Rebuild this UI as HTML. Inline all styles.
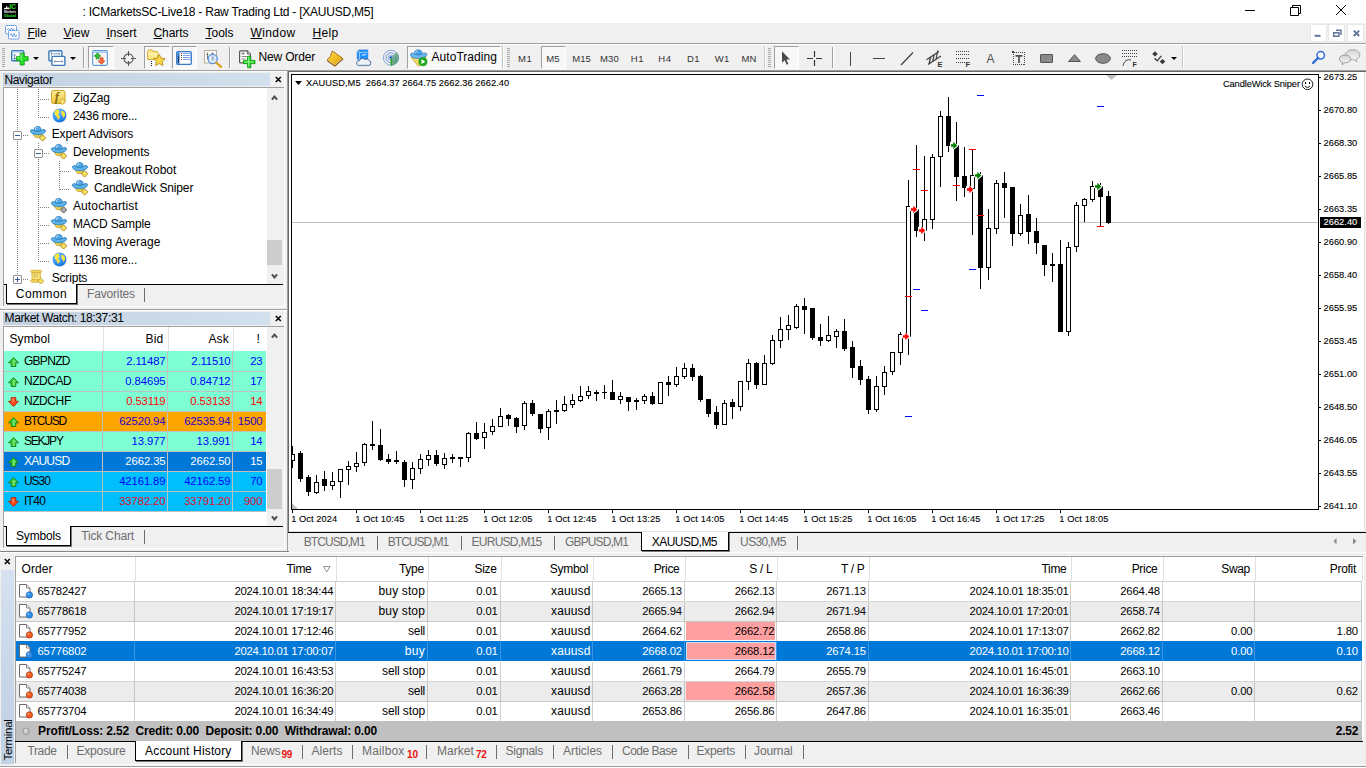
<!DOCTYPE html>
<html><head><meta charset="utf-8"><title>ICMarketsSC-Live18 - Raw Trading Ltd - [XAUUSD,M5]</title>
<style>
html,body{margin:0;padding:0;}
body{width:1366px;height:768px;overflow:hidden;background:#f0f0f0;position:relative;font-family:"Liberation Sans",sans-serif;}
div{position:absolute;box-sizing:border-box;}
svg{position:absolute;overflow:visible;}
.t{white-space:pre;}
u{text-decoration:underline;text-underline-offset:1px;}
</style></head><body>

<div style="left:0px;top:0px;width:1366px;height:23px;background:#fff;"></div>
<svg style="left:2px;top:3px" width="16" height="16" viewBox="0 0 16 16"><rect width="16" height="16" fill="#000"/>
<rect x="2" y="4.900" width="5.500" height="1.300" fill="#fff"/><rect x="4" y="3.400" width="1.300" height="2" fill="#fff"/><rect x="5.700" y="4.200" width="1" height="1" fill="#ddd"/>
<text x="7.600" y="6.200" font-size="6.800" font-weight="bold" fill="#2fe52f" font-family="Liberation Sans, sans-serif" textLength="6.400" lengthAdjust="spacingAndGlyphs">IC</text>
<text x="2" y="9.800" font-size="3.200" font-weight="bold" fill="#f4f4f4" font-family="Liberation Sans, sans-serif" textLength="12" lengthAdjust="spacingAndGlyphs">Markets</text>
<text x="2" y="13.500" font-size="3.800" font-weight="bold" fill="#2fe52f" font-family="Liberation Sans, sans-serif" textLength="12" lengthAdjust="spacingAndGlyphs">Global</text></svg>
<div class="t" style="top:3.5px;height:16px;line-height:16px;font-size:12px;color:#000;white-space:pre;letter-spacing:-0.23px;left:82.5px;">: ICMarketsSC-Live18 - Raw Trading Ltd - [XAUUSD,M5]</div>
<svg style="left:1240px;top:0" width="126" height="23" viewBox="0 0 126 23" fill="none" stroke="#000" stroke-width="1">
<path d="M5 10.5h10"/><path d="M50.5 7.5h8v8h-8z"/><path d="M52.5 7.5v-2h8v8h-2"/><path d="M96 5l10 10M106 5l-10 10"/></svg>
<div style="left:0px;top:23px;width:1366px;height:20px;background:#f0f0f0;"></div>
<svg style="left:5px;top:25px" width="15" height="15" viewBox="0 0 15 15" fill="#fff" stroke="#4a86e0" stroke-width="1">
<rect x="0.500" y="0.500" width="11" height="8.500" rx="1" stroke-dasharray="1.500 0.500"/><path d="M2 5l1.500-1.500 1.500 2 1.500-2.500 1.500 2 1.500-1" fill="none" stroke-width="0.800"/>
<rect x="3.500" y="5.500" width="10.500" height="8.500" rx="1" stroke-dasharray="1.500 0.500"/><path d="M5 10.500l1.300-2 1.400 3.500 1.400-3.500 1.400 3.500 1.300-2" fill="none" stroke-width="0.800"/></svg>
<div class="t" style="top:25.0px;height:16px;line-height:16px;font-size:12px;color:#000;white-space:pre;left:27.5px;letter-spacing:-0.08px;"><u>F</u>ile</div>
<div class="t" style="top:25.0px;height:16px;line-height:16px;font-size:12px;color:#000;white-space:pre;left:63.5px;letter-spacing:0.05px;"><u>V</u>iew</div>
<div class="t" style="top:25.0px;height:16px;line-height:16px;font-size:12px;color:#000;white-space:pre;left:106.5px;letter-spacing:-0.00px;"><u>I</u>nsert</div>
<div class="t" style="top:25.0px;height:16px;line-height:16px;font-size:12px;color:#000;white-space:pre;left:153.5px;letter-spacing:-0.06px;"><u>C</u>harts</div>
<div class="t" style="top:25.0px;height:16px;line-height:16px;font-size:12px;color:#000;white-space:pre;left:205.5px;letter-spacing:-0.00px;"><u>T</u>ools</div>
<div class="t" style="top:25.0px;height:16px;line-height:16px;font-size:12px;color:#000;white-space:pre;left:250.5px;letter-spacing:0.39px;"><u>W</u>indow</div>
<div class="t" style="top:25.0px;height:16px;line-height:16px;font-size:12px;color:#000;white-space:pre;left:312.5px;letter-spacing:0.33px;"><u>H</u>elp</div>
<div style="left:1310px;top:24px;width:17px;height:18px;background:#fff;border:1px solid #e8e8e8;"></div>
<div style="left:1328px;top:24px;width:17px;height:18px;background:#fff;border:1px solid #e8e8e8;"></div>
<div style="left:1347px;top:24px;width:17px;height:18px;background:#fff;border:1px solid #e8e8e8;"></div>
<svg style="left:1310px;top:24px" width="56" height="18" viewBox="0 0 56 18" fill="none" stroke="#63759a" stroke-width="2">
<path d="M4.500 11.800h6"/><path d="M23.700 8.700h5.200v3.600h-5.200z" stroke-width="1.400"/><path d="M26 6.200h5v3.800h-1.500" stroke-width="1.400"/><path d="M43.800 6.600l5.400 5.400M49.200 6.600l-5.400 5.400" stroke-width="1.900"/></svg>
<div style="left:0px;top:43px;width:1366px;height:1px;background:#a0a0a0;"></div>
<div style="left:0px;top:44px;width:1366px;height:1px;background:#fff;"></div>
<div style="left:0px;top:45px;width:1366px;height:25px;background:#f0f0f0;"></div>
<div style="left:2px;top:48px;width:3px;height:1px;background:#a8a8a8;"></div>
<div style="left:2px;top:50px;width:3px;height:1px;background:#a8a8a8;"></div>
<div style="left:2px;top:52px;width:3px;height:1px;background:#a8a8a8;"></div>
<div style="left:2px;top:54px;width:3px;height:1px;background:#a8a8a8;"></div>
<div style="left:2px;top:56px;width:3px;height:1px;background:#a8a8a8;"></div>
<div style="left:2px;top:58px;width:3px;height:1px;background:#a8a8a8;"></div>
<div style="left:2px;top:60px;width:3px;height:1px;background:#a8a8a8;"></div>
<div style="left:2px;top:62px;width:3px;height:1px;background:#a8a8a8;"></div>
<div style="left:2px;top:64px;width:3px;height:1px;background:#a8a8a8;"></div>
<div style="left:2px;top:66px;width:3px;height:1px;background:#a8a8a8;"></div>
<svg style="left:11px;top:49px" width="18" height="17" viewBox="0 0 18 17">
<rect x="0.700" y="1.700" width="12" height="10" rx="1" fill="#fff" stroke="#3b78b8" stroke-width="1.400"/><rect x="1.400" y="2.300" width="10.600" height="1.400" fill="#a9cbee"/>
<path d="M3.500 5v5.500M2.300 6.500L3.500 5l1.200 1.500M2.300 9l1.200 1.500L4.700 9" stroke="#6d8fb5" fill="none" stroke-width="0.900"/>
<path d="M9.200 4.200h4v3.500h3.900v4h-3.900V16h-4v-4.300H5.300v-4h3.900z" fill="#2be02b" stroke="#0e9a0e" stroke-width="0.900"/><path d="M10.200 5.200v6.500M6.300 8.700h3" stroke="#8df58d" stroke-width="0.900" fill="none"/></svg>
<svg style="left:33px;top:57px" width="6" height="3" viewBox="0 0 6 3"><path d="M0 0h6l-3 3z" fill="#000"/></svg>
<svg style="left:48px;top:49px" width="18" height="17" viewBox="0 0 18 17" fill="#fff" stroke="#3b78b8" stroke-width="1.400">
<rect x="0.900" y="1.700" width="13" height="10" rx="1"/><path d="M3.500 3.200v3.400M2.700 4.200l.8-1 .8 1M5 4.800h7M10.800 3.800l1.200 1-1.200 1" stroke="#6d8fb5" stroke-width="0.900" fill="none"/>
<rect x="3.900" y="7.400" width="13" height="9" rx="1"/><path d="M6 12.500h9M7.200 11.500L6 12.500l1.200 1M13.800 11.500l1.200 1-1.200 1" stroke="#6d8fb5" stroke-width="0.900" fill="none"/></svg>
<svg style="left:70px;top:57px" width="6" height="3" viewBox="0 0 6 3"><path d="M0 0h6l-3 3z" fill="#000"/></svg>
<div style="left:83px;top:47px;width:1px;height:21px;background:#a0a0a0;"></div>
<div style="left:84px;top:47px;width:1px;height:21px;background:#fff;"></div>
<div style="left:88px;top:46px;width:26px;height:23px;background:#f8f8f8;border:1px solid #fff;border-top-color:#a0a0a0;border-left-color:#a0a0a0;"></div>
<svg style="left:92px;top:50px" width="16" height="16" viewBox="0 0 16 16">
<rect x="0.700" y="0.700" width="14.600" height="14.600" rx="1.500" fill="#fff" stroke="#5b9bd8" stroke-width="1.200"/><rect x="1.300" y="1.300" width="13.400" height="1.600" fill="#a5cdf2"/>
<path d="M8 6h6M3 10h4M3 12.500h5M9 4h5" stroke="#e0e0e0" stroke-width="0.800"/>
<path d="M5.500 2.800l3.300 3.400H7V8.800H4V6.200H2.200z" fill="#35c435" stroke="#128512" stroke-width="0.700"/>
<path d="M9.600 14.300L6.300 10.900h1.800V7.800h3v3.100h1.800z" fill="#ff6a3c" stroke="#c23a12" stroke-width="0.700"/></svg>
<svg style="left:121px;top:51px" width="15" height="15" viewBox="0 0 15 15" fill="none" stroke="#555" stroke-width="1.100">
<circle cx="7.500" cy="7.500" r="4.600"/><path d="M7.500 0v5M7.500 10v5M0 7.500h5M10 7.500h5"/></svg>
<div style="left:144px;top:46px;width:26px;height:23px;background:#f8f8f8;border:1px solid #fff;border-top-color:#a0a0a0;border-left-color:#a0a0a0;"></div>
<svg style="left:147px;top:49px" width="20" height="18" viewBox="0 0 20 18">
<path d="M0.600 2.500c0-1 .5-1.500 1.500-1.500h2.500c1 0 1.400.5 1.600 1.500h3.300c1 0 1.500.5 1.500 1.500v6.500h-10.400z" fill="#fbe88a" stroke="#c9a227" stroke-width="0.900"/>
<path d="M1 5h9.600" stroke="#fff6c8" stroke-width="1"/>
<path d="M12.300 5.400l1.800 3.700 4 .6-2.900 2.800.7 4-3.600-1.900-3.600 1.900.7-4-2.900-2.800 4-.6z" fill="#f9d849" stroke="#b98a12" stroke-width="0.900" stroke-linejoin="round"/>
<path d="M4.500 12v5.500" stroke="#222" stroke-dasharray="1 1"/></svg>
<div style="left:172px;top:46px;width:25px;height:23px;background:#f8f8f8;border:1px solid #fff;border-top-color:#a0a0a0;border-left-color:#a0a0a0;"></div>
<svg style="left:176px;top:51px" width="16" height="14" viewBox="0 0 16 14">
<rect x="0.700" y="0.700" width="14.600" height="12.600" rx="1.200" fill="#fff" stroke="#3b78c8" stroke-width="1.300"/><rect x="1.300" y="1.300" width="2.200" height="11.400" fill="#3b78c8"/><rect x="2" y="5" width="1" height="7" fill="#16335e"/>
<path d="M6.500 2.500h8M6.500 4.500h8M6.500 6.500h8M6.500 8.500h8" stroke="#7fa6e6" stroke-width="1" shape-rendering="crispEdges"/>
<g shape-rendering="crispEdges"><rect x="5" y="2" width="1" height="1" fill="#e11"/><rect x="5" y="4" width="1" height="1" fill="#222"/><rect x="5" y="6" width="1" height="1" fill="#262"/><rect x="5" y="8" width="1" height="1" fill="#e11"/></g></svg>
<svg style="left:204px;top:50px" width="19" height="18" viewBox="0 0 19 18">
<rect x="0.500" y="0.500" width="12" height="12.500" fill="#fbfaf6" stroke="#b8ae98"/><path d="M3.500 2.500v7M8.500 2.500v7M2.500 4.500h2M7.500 3.500h2" stroke="#666" stroke-width="0.900"/>
<circle cx="8.700" cy="9" r="4.600" fill="#d6e8fb" fill-opacity="0.850" stroke="#5b94dc" stroke-width="1.300"/><rect x="7.700" y="6.500" width="2" height="4" fill="#9fb3c8"/>
<path d="M12.200 12.500l4.800 4.300" stroke="#d9a01f" stroke-width="2.300" stroke-linecap="round"/></svg>
<div style="left:229px;top:47px;width:1px;height:21px;background:#a0a0a0;"></div>
<div style="left:230px;top:47px;width:1px;height:21px;background:#fff;"></div>
<svg style="left:238px;top:50px" width="18" height="18" viewBox="0 0 18 18">
<path d="M2.600 0.900h6.700l3 3v9h-9.700c-.6 0-1-.4-1-1v-10c0-.6.400-1 1-1z" fill="#fff" stroke="#555" stroke-width="1.200"/><path d="M9.300 0.900v3h3" fill="#ddd" stroke="#555" stroke-width="0.900"/>
<path d="M3.500 3.500h3" stroke="#777" stroke-width="1.600"/><path d="M3.500 6.500h5.500M3.500 9h4" stroke="#888" stroke-width="1"/>
<path d="M9.600 6.200h3.200v4.200h4.200v3.200h-4.200v4.100h-3.200v-4.100h-4.200v-3.200h4.200z" fill="#22d822" stroke="#0e9a0e" stroke-width="0.900"/><path d="M10.700 7.200v9.500M6.400 12h9.600" stroke="#a8f8a8" stroke-width="0.900" fill="none"/></svg>
<div class="t" style="top:49.0px;height:16px;line-height:16px;font-size:12px;color:#000;white-space:pre;letter-spacing:-0.17px;left:258.5px;">New Order</div>
<svg style="left:326px;top:50px" width="18" height="17" viewBox="0 0 18 17">
<defs><linearGradient id="bk" x1="0" y1="0" x2="1" y2="1"><stop offset="0" stop-color="#fbe05a"/><stop offset="0.500" stop-color="#f2c022"/><stop offset="1" stop-color="#d89a14"/></linearGradient></defs>
<path d="M6.400 1L16.800 8.400L8.800 15.600L1 9.800C2.800 8.800 4 7 4.800 5.200C5.400 3.600 5.800 2 6.400 1Z" fill="url(#bk)" stroke="#9a6410" stroke-width="0.900" stroke-linejoin="round"/>
<path d="M1.600 10.600L8.800 15.900L16.900 8.800" fill="none" stroke="#8a5608" stroke-width="1.500"/><path d="M2.200 10.300L8.800 14.900L16 8.700" fill="none" stroke="#fdf0c0" stroke-width="0.700"/></svg>
<svg style="left:355px;top:49px" width="17" height="18" viewBox="0 0 17 18">
<path d="M2.200 2.200L4.500 0.900h8.300v9.300H2.200z" fill="#1e90ff" stroke="#1b78e0" stroke-width="0.600"/><path d="M2.200 2.200L4.600 3.300V10M4.600 3.300h8" stroke="#bfe0ff" stroke-width="0.800" fill="none"/><path d="M7 6.300l4-.8" stroke="#e8f4ff" stroke-width="1.100"/>
<path d="M3.300 16.600h10.200a2.600 2.600 0 0 0 .4-5.100 2.500 2.500 0 0 0-4-.9 3 3 0 0 0-5.300 1 2.600 2.600 0 0 0-1.300 5z" fill="#eef2f8" stroke="#4a6a9c" stroke-width="1"/>
<path d="M3.500 15.800h10" stroke="#c3cfe2" stroke-width="1"/></svg>
<svg style="left:382px;top:49px" width="18" height="18" viewBox="0 0 18 18" fill="none">
<defs><linearGradient id="sg" x1="0" y1="0" x2="1" y2="1"><stop offset="0" stop-color="#b4dcae"/><stop offset="1" stop-color="#2e8f2e"/></linearGradient></defs>
<path d="M8.900 8.700V16.700A8 8 0 0 0 16.900 8.700A8 8 0 0 0 14.500 3z" fill="url(#sg)" fill-opacity="0.950"/>
<circle cx="8.900" cy="8.700" r="7.500" stroke="#5a86dc" stroke-width="0.900" stroke-opacity="0.800"/><circle cx="8.900" cy="8.700" r="5" stroke="#4a78d8" stroke-width="0.900" stroke-opacity="0.850"/><circle cx="8.900" cy="8.700" r="2.800" stroke="#3a6fd8" stroke-width="0.800" stroke-opacity="0.700"/>
<circle cx="8.900" cy="8.500" r="1.500" fill="#2a5fd0"/><path d="M9.300 9v7.500" stroke="#2aa52a" stroke-width="1.500"/></svg>
<div style="left:407px;top:46px;width:94px;height:23px;background:#f8f8f8;border:1px solid #fff;border-top-color:#a0a0a0;border-left-color:#a0a0a0;"></div>
<svg style="left:410px;top:49px" width="18" height="19" viewBox="0 0 18 19">
<path d="M1.200 8L16.300 7.600L9.400 16.600C9 17 8.200 17 7.800 16.600Z" fill="#f7dc6a" stroke="#c49a22" stroke-width="0.800"/>
<path d="M4.300 6C4 1.600 6.200 0.800 8.200 0.800C10.300 0.800 12.400 1.600 12.100 6Z" fill="#4fa3e6" stroke="#2478bd" stroke-width="0.700"/>
<path d="M0.500 6C0.400 3.600 2.800 3.600 4.600 5C6.700 6.200 9.700 6.200 11.800 5C13.700 3.600 17 3.300 16.900 5.500C16.600 8 12.200 9.600 8.600 9.600C5 9.600 0.800 8.400 0.500 6Z" fill="#6cb8ee" stroke="#2478bd" stroke-width="0.700"/>
<path d="M5.600 4.200C5.600 2.300 6.700 1.800 7.800 1.800" fill="none" stroke="#bfe0fa" stroke-width="0.900"/>
<circle cx="12.900" cy="12.700" r="4.100" fill="#1fae1f" stroke="#0d8a0d" stroke-width="0.600"/><path d="M11.500 10.300v4.800l3.900-2.400z" fill="#fff"/></svg>
<div class="t" style="top:49.0px;height:16px;line-height:16px;font-size:12px;color:#000;white-space:pre;letter-spacing:0.05px;left:431.5px;">AutoTrading</div>
<div style="left:502px;top:46px;width:1px;height:23px;background:#c8c8c8;"></div>
<div style="left:503px;top:46px;width:1px;height:23px;background:#fff;"></div>
<div style="left:507px;top:48px;width:3px;height:1px;background:#a8a8a8;"></div>
<div style="left:507px;top:50px;width:3px;height:1px;background:#a8a8a8;"></div>
<div style="left:507px;top:52px;width:3px;height:1px;background:#a8a8a8;"></div>
<div style="left:507px;top:54px;width:3px;height:1px;background:#a8a8a8;"></div>
<div style="left:507px;top:56px;width:3px;height:1px;background:#a8a8a8;"></div>
<div style="left:507px;top:58px;width:3px;height:1px;background:#a8a8a8;"></div>
<div style="left:507px;top:60px;width:3px;height:1px;background:#a8a8a8;"></div>
<div style="left:507px;top:62px;width:3px;height:1px;background:#a8a8a8;"></div>
<div style="left:507px;top:64px;width:3px;height:1px;background:#a8a8a8;"></div>
<div style="left:507px;top:66px;width:3px;height:1px;background:#a8a8a8;"></div>
<div style="left:541px;top:46px;width:25px;height:23px;background:#f8f8f8;border:1px solid #fff;border-top-color:#a0a0a0;border-left-color:#a0a0a0;"></div>
<div class="t" style="top:51.3px;height:16px;line-height:16px;font-size:9.5px;color:#333;white-space:pre;letter-spacing:0.60px;left:517.9px;">M1</div>
<div class="t" style="top:51.3px;height:16px;line-height:16px;font-size:9.5px;color:#333;white-space:pre;letter-spacing:0.25px;left:546.2px;">M5</div>
<div class="t" style="top:51.3px;height:16px;line-height:16px;font-size:9.5px;color:#333;white-space:pre;letter-spacing:-0.03px;left:572.3px;">M15</div>
<div class="t" style="top:51.3px;height:16px;line-height:16px;font-size:9.5px;color:#333;white-space:pre;letter-spacing:0.21px;left:599.9px;">M30</div>
<div class="t" style="top:51.3px;height:16px;line-height:16px;font-size:9.5px;color:#333;white-space:pre;letter-spacing:0.58px;left:630.7px;">H1</div>
<div class="t" style="top:51.3px;height:16px;line-height:16px;font-size:9.5px;color:#333;white-space:pre;letter-spacing:0.58px;left:658.3px;">H4</div>
<div class="t" style="top:51.3px;height:16px;line-height:16px;font-size:9.5px;color:#333;white-space:pre;letter-spacing:0.28px;left:687.0px;">D1</div>
<div class="t" style="top:51.3px;height:16px;line-height:16px;font-size:9.5px;color:#333;white-space:pre;letter-spacing:0.32px;left:714.7px;">W1</div>
<div class="t" style="top:51.3px;height:16px;line-height:16px;font-size:9.5px;color:#333;white-space:pre;letter-spacing:0.26px;left:741.4px;">MN</div>
<div style="left:764px;top:46px;width:1px;height:23px;background:#c8c8c8;"></div>
<div style="left:765px;top:46px;width:1px;height:23px;background:#fff;"></div>
<div style="left:768px;top:48px;width:3px;height:1px;background:#a8a8a8;"></div>
<div style="left:768px;top:50px;width:3px;height:1px;background:#a8a8a8;"></div>
<div style="left:768px;top:52px;width:3px;height:1px;background:#a8a8a8;"></div>
<div style="left:768px;top:54px;width:3px;height:1px;background:#a8a8a8;"></div>
<div style="left:768px;top:56px;width:3px;height:1px;background:#a8a8a8;"></div>
<div style="left:768px;top:58px;width:3px;height:1px;background:#a8a8a8;"></div>
<div style="left:768px;top:60px;width:3px;height:1px;background:#a8a8a8;"></div>
<div style="left:768px;top:62px;width:3px;height:1px;background:#a8a8a8;"></div>
<div style="left:768px;top:64px;width:3px;height:1px;background:#a8a8a8;"></div>
<div style="left:768px;top:66px;width:3px;height:1px;background:#a8a8a8;"></div>
<div style="left:774px;top:46px;width:25px;height:23px;background:#f8f8f8;border:1px solid #fff;border-top-color:#a0a0a0;border-left-color:#a0a0a0;"></div>
<svg style="left:781px;top:51px" width="10" height="15" viewBox="0 0 10 15"><path d="M1 0.300v11.400l2.700-2.500 2 4.500 1.700-0.800-2-4.400h3.600z" fill="#4a4a4a"/></svg>
<svg style="left:807px;top:51px" width="15" height="15" viewBox="0 0 15 15" stroke="#333" stroke-width="1.200"><path d="M7.500 0v6M7.500 9v6M0 7.500h6M9 7.500h6"/></svg>
<div style="left:832px;top:47px;width:1px;height:21px;background:#a0a0a0;"></div>
<div style="left:833px;top:47px;width:1px;height:21px;background:#fff;"></div>
<div style="left:850px;top:52px;width:1.3px;height:14px;background:#444;"></div>
<div style="left:873px;top:58px;width:12px;height:1.3px;background:#444;"></div>
<svg style="left:900px;top:51px" width="14" height="15" viewBox="0 0 14 15"><path d="M1 14L13 1.500" stroke="#444" stroke-width="1.300"/></svg>
<svg style="left:926px;top:49px" width="18" height="19" viewBox="0 0 18 19" stroke="#3c3c3c" stroke-width="1.200" fill="none">
<path d="M0.600 10.800L12.900 2.500M2 15.500L15 7M3 15l1.800-7.500M6.500 12.800l1.800-7.500M10 10.500l1.800-9"/><text x="11.500" y="18" font-size="7.500" font-weight="bold" fill="#333" stroke="none" font-family="Liberation Sans, sans-serif">E</text></svg>
<svg style="left:955px;top:50px" width="16" height="18" viewBox="0 0 16 18" fill="none">
<g shape-rendering="crispEdges" stroke="#444" stroke-width="1"><path d="M1 1.500h13M1 4.500h13M1 8.500h13M1 12.500h9" stroke-dasharray="1 1"/></g><text x="10.500" y="17.300" font-size="7.500" font-weight="bold" fill="#333" font-family="Liberation Sans, sans-serif">F</text></svg>
<div class="t" style="top:50.7px;height:16px;line-height:16px;font-size:12px;color:#505050;white-space:pre;letter-spacing:0.70px;left:986.5px;">A</div>
<svg style="left:1012px;top:51px" width="14" height="15" viewBox="0 0 14 15" fill="none">
<g shape-rendering="crispEdges"><rect x="1.500" y="1.500" width="11" height="12" stroke="#444" stroke-dasharray="1 1"/><rect x="0" y="0" width="2" height="2" fill="#444"/></g><path d="M3.500 4.800h7M7 4.800v7.200" stroke="#505050" stroke-width="1.700"/></svg>
<div style="left:1040px;top:54px;width:13px;height:9px;background:#8a8a8a;border:1px solid #555;border-radius:1px;"></div>
<svg style="left:1068px;top:54px" width="13" height="8" viewBox="0 0 13 8"><path d="M0.500 7.500L6.500 0.700l6 6.800z" fill="#8a8a8a" stroke="#555"/></svg>
<svg style="left:1095px;top:53px" width="16" height="11" viewBox="0 0 16 11"><ellipse cx="8" cy="5.500" rx="7.400" ry="4.800" fill="#8a8a8a" stroke="#555"/></svg>
<svg style="left:1122px;top:49px" width="17" height="19" viewBox="0 0 17 19" stroke="#444" stroke-width="1" fill="none">
<path d="M0 1.500h15M0 4.500h15M0 7.500h15" stroke-dasharray="1 1"/><path d="M1 17c1-5 4-7 8-6"/><text x="10.500" y="18" font-size="7" font-weight="bold" fill="#333" stroke="none" font-family="Liberation Sans, sans-serif">F</text></svg>
<svg style="left:1151px;top:51px" width="16" height="15" viewBox="0 0 16 15" fill="#3a3a3a">
<path d="M4 0.300l2.800 2.600-2.800 2.600-2.800-2.600z"/><path d="M11.500 8l2.800 2.600-2.800 2.600-2.800-2.600z"/><path d="M3.500 7.200l2.800 2.600 4-5" stroke="#3a3a3a" stroke-width="1.300" fill="none"/></svg>
<svg style="left:1171px;top:57px" width="6" height="3" viewBox="0 0 6 3"><path d="M0 0h6l-3 3z" fill="#000"/></svg>
<div style="left:1182px;top:46px;width:1px;height:23px;background:#c8c8c8;"></div>
<div style="left:1183px;top:46px;width:1px;height:23px;background:#fff;"></div>
<svg style="left:1311px;top:50px" width="16" height="16" viewBox="0 0 16 16" fill="none">
<circle cx="9.700" cy="5.300" r="3.700" stroke="#2f6ad8" stroke-width="1.500" fill="#fff"/><path d="M7 8L2 13" stroke="#2f6ad8" stroke-width="2.300" stroke-linecap="round"/></svg>
<svg style="left:1338px;top:49px" width="24" height="18" viewBox="0 0 24 18">
<defs><linearGradient id="cb" x1="0" y1="0" x2="0" y2="1"><stop offset="0" stop-color="#d4d4d4"/><stop offset="1" stop-color="#fafafa"/></linearGradient></defs>
<path d="M14.500 0.800c4.200 0 7.300 2.200 7.300 5 0 2-1.500 3.500-3.600 4.300l.8 2.700-3.200-2.100c-4.600.3-8.300-1.900-8.300-4.900 0-2.800 3.100-5 7-5z" fill="url(#cb)" stroke="#9c9c9c" stroke-width="0.900"/>
<path d="M7 6c3.200 0 5.700 1.800 5.700 4 0 2.300-2.800 4-6 3.800l-2.700 2 .6-2.600C2.600 12.500 1.300 11.300 1.300 10c0-2.200 2.500-4 5.700-4z" fill="url(#cb)" stroke="#949494" stroke-width="0.900"/></svg>
<div style="left:0px;top:70px;width:1366px;height:1px;background:#a0a0a0;"></div>
<div style="left:3px;top:73px;width:267px;height:13px;background:linear-gradient(90deg,#c3d1e1 0%,#cad8e7 50%,#d3e0ee 100%);"></div>
<div class="t" style="top:71.5px;height:16px;line-height:16px;font-size:12px;color:#000;white-space:pre;letter-spacing:-0.37px;left:4.5px;">Navigator</div>
<svg style="left:275px;top:76px" width="7" height="7" viewBox="0 0 7 7"><path d="M0.800 1l5 5M5.800 1l-5 5" stroke="#000" stroke-width="1.500"/></svg>
<div style="left:3px;top:87px;width:281px;height:197px;background:#fff;border-left:1px solid #a0a0a0;border-top:1px solid #a0a0a0;"></div>
<div style="left:267px;top:88px;width:17px;height:196px;background:#f0f0f0;"></div>
<div style="left:267px;top:240px;width:15px;height:25px;background:#cdcdcd;"></div>
<svg style="left:271px;top:95px" width="7" height="6" viewBox="0 0 7 6"><path d="M0.900 4.700L3.500 1.500L6.100 4.700" fill="none" stroke="#505050" stroke-width="2"/></svg>
<svg style="left:271px;top:273px" width="7" height="6" viewBox="0 0 7 6"><path d="M0.900 1.300L3.500 4.500L6.100 1.300" fill="none" stroke="#505050" stroke-width="2"/></svg>
<div style="left:17px;top:89px;width:1px;height:42px;background:repeating-linear-gradient(180deg,#808080 0 1px,transparent 1px 2px);"></div>
<div style="left:17px;top:141px;width:1px;height:134px;background:repeating-linear-gradient(180deg,#808080 0 1px,transparent 1px 2px);"></div>
<div style="left:38px;top:89px;width:1px;height:29px;background:repeating-linear-gradient(180deg,#808080 0 1px,transparent 1px 2px);"></div>
<div style="left:40px;top:99px;width:9px;height:1px;background:repeating-linear-gradient(90deg,#808080 0 1px,transparent 1px 2px);"></div>
<div style="left:40px;top:117px;width:9px;height:1px;background:repeating-linear-gradient(90deg,#808080 0 1px,transparent 1px 2px);"></div>
<div style="left:23px;top:135px;width:5px;height:1px;background:repeating-linear-gradient(90deg,#808080 0 1px,transparent 1px 2px);"></div>
<div style="left:38px;top:143px;width:1px;height:6px;background:repeating-linear-gradient(180deg,#808080 0 1px,transparent 1px 2px);"></div>
<div style="left:38px;top:159px;width:1px;height:103px;background:repeating-linear-gradient(180deg,#808080 0 1px,transparent 1px 2px);"></div>
<div style="left:44px;top:153px;width:5px;height:1px;background:repeating-linear-gradient(90deg,#808080 0 1px,transparent 1px 2px);"></div>
<div style="left:40px;top:207px;width:9px;height:1px;background:repeating-linear-gradient(90deg,#808080 0 1px,transparent 1px 2px);"></div>
<div style="left:40px;top:225px;width:9px;height:1px;background:repeating-linear-gradient(90deg,#808080 0 1px,transparent 1px 2px);"></div>
<div style="left:40px;top:243px;width:9px;height:1px;background:repeating-linear-gradient(90deg,#808080 0 1px,transparent 1px 2px);"></div>
<div style="left:40px;top:261px;width:9px;height:1px;background:repeating-linear-gradient(90deg,#808080 0 1px,transparent 1px 2px);"></div>
<div style="left:59px;top:161px;width:1px;height:29px;background:repeating-linear-gradient(180deg,#808080 0 1px,transparent 1px 2px);"></div>
<div style="left:60px;top:171px;width:10px;height:1px;background:repeating-linear-gradient(90deg,#808080 0 1px,transparent 1px 2px);"></div>
<div style="left:60px;top:189px;width:10px;height:1px;background:repeating-linear-gradient(90deg,#808080 0 1px,transparent 1px 2px);"></div>
<div style="left:23px;top:279px;width:5px;height:1px;background:repeating-linear-gradient(90deg,#808080 0 1px,transparent 1px 2px);"></div>
<div style="left:13px;top:131px;width:9px;height:9px;background:#fff;border:1px solid #919191;border-radius:1px;"></div>
<div style="left:15px;top:135px;width:5px;height:1px;background:#3a5ba0;"></div>
<div style="left:34px;top:149px;width:9px;height:9px;background:#fff;border:1px solid #919191;border-radius:1px;"></div>
<div style="left:36px;top:153px;width:5px;height:1px;background:#3a5ba0;"></div>
<div style="left:13px;top:275px;width:9px;height:9px;background:#fff;border:1px solid #919191;border-radius:1px;"></div>
<div style="left:15px;top:279px;width:5px;height:1px;background:#3a5ba0;"></div>
<div style="left:17px;top:277px;width:1px;height:5px;background:#3a5ba0;"></div>
<svg style="left:51px;top:90px" width="16" height="16" viewBox="0 0 16 16">
<defs><linearGradient id="fg" x1="0" y1="0" x2="0" y2="1"><stop offset="0" stop-color="#fbec9a"/><stop offset="1" stop-color="#f1c93a"/></linearGradient></defs>
<rect x="0.500" y="0.500" width="13.500" height="13" rx="2" fill="url(#fg)" stroke="#c9a227"/>
<text x="3.800" y="10.800" font-size="13" font-style="italic" font-weight="bold" fill="#8a6a10" font-family="Liberation Serif, serif">f</text>
<path d="M11.500 8.300l3.200 3.200-3.200 3.200-3.200-3.200z" fill="#f9e27a" stroke="#c49a22" stroke-width="0.800"/></svg>
<div class="t" style="top:90.0px;height:16px;line-height:16px;font-size:12px;color:#000;white-space:pre;letter-spacing:-0.06px;left:72.9px;">ZigZag</div>
<svg style="left:51.5px;top:107.8px" width="15" height="15" viewBox="0 0 15 15">
<defs><radialGradient id="gg1" cx="0.350" cy="0.300" r="0.800"><stop offset="0" stop-color="#7cc4ff"/><stop offset="0.600" stop-color="#2f8ff0"/><stop offset="1" stop-color="#1667d6"/></radialGradient></defs>
<circle cx="7.500" cy="7.500" r="6.900" fill="url(#gg1)"/>
<path d="M2.600 3.600C3.600 2 5.600 1.300 6.800 1.600C7.600 2.400 6.600 3.200 7.200 4C7.800 5 6.200 5.400 6.400 6.600C6.600 7.800 8 8 7.600 9.400C7.300 10.600 6.800 11.600 5.600 11.400C5 10 5.300 9 4.300 8.200C3.200 7.200 2 5.600 2.600 3.600Z" fill="#ffe53a"/>
<path d="M9.800 2.600C11.600 3 13 4.800 13.200 6.600C13 8.200 12.400 9.400 11.600 10C11 9 11.200 8 10.300 7.400C9.400 6.600 9.600 5.400 9.300 4.400C9.100 3.600 9.300 3 9.800 2.600Z" fill="#ffe53a"/></svg>
<div class="t" style="top:108.0px;height:16px;line-height:16px;font-size:12px;color:#000;white-space:pre;letter-spacing:-0.26px;left:72.9px;">2436 more...</div>
<svg style="left:30px;top:126px" width="17" height="16" viewBox="0 0 17 16"><path d="M3.600 7.400C3.600 13 11.400 13 11.400 7.400Z" fill="#f6d64e" stroke="#b8901a" stroke-width="0.800"/>
<path d="M4 5.300C3.800 1.300 5.800 0.500 7.600 0.500C9.600 0.500 11.400 1.300 11.200 5.300Z" fill="#56a9e6" stroke="#1d79b8" stroke-width="0.800"/>
<path d="M0.500 5.200C0.400 3.200 2.600 3.300 4.300 4.600C6.300 5.700 9.100 5.700 11.100 4.600C12.900 3.300 15.600 3 15.500 5C15.200 7.400 11.300 8.800 8 8.800C4.700 8.800 0.800 7.600 0.500 5.200Z" fill="#5fb2e8" stroke="#1d79b8" stroke-width="0.800"/>
<path d="M5.300 3.800C5.300 2 6.300 1.500 7.300 1.500" fill="none" stroke="#cfe8fb" stroke-width="1"/>
<path d="M12.600 8.700l3.200 3.200-3.200 3.200-3.200-3.200z" fill="#f8de62" stroke="#a88414" stroke-width="0.900"/></svg>
<div class="t" style="top:126.0px;height:16px;line-height:16px;font-size:12px;color:#000;white-space:pre;letter-spacing:-0.12px;left:51.7px;">Expert Advisors</div>
<svg style="left:51px;top:144px" width="17" height="16" viewBox="0 0 17 16"><path d="M3.600 7.400C3.600 13 11.400 13 11.400 7.400Z" fill="#f6d64e" stroke="#b8901a" stroke-width="0.800"/>
<path d="M4 5.300C3.800 1.300 5.800 0.500 7.600 0.500C9.600 0.500 11.400 1.300 11.200 5.300Z" fill="#56a9e6" stroke="#1d79b8" stroke-width="0.800"/>
<path d="M0.500 5.200C0.400 3.200 2.600 3.300 4.300 4.600C6.300 5.700 9.100 5.700 11.100 4.600C12.900 3.300 15.600 3 15.500 5C15.200 7.400 11.300 8.800 8 8.800C4.700 8.800 0.800 7.600 0.500 5.200Z" fill="#5fb2e8" stroke="#1d79b8" stroke-width="0.800"/>
<path d="M5.300 3.800C5.300 2 6.300 1.500 7.300 1.500" fill="none" stroke="#cfe8fb" stroke-width="1"/>
<path d="M12.600 8.700l3.200 3.200-3.200 3.200-3.200-3.200z" fill="#f8de62" stroke="#a88414" stroke-width="0.900"/></svg>
<div class="t" style="top:144.0px;height:16px;line-height:16px;font-size:12px;color:#000;white-space:pre;left:72.9px;">Developments</div>
<svg style="left:72px;top:162px" width="17" height="16" viewBox="0 0 17 16"><path d="M3.600 7.400C3.600 13 11.400 13 11.400 7.400Z" fill="#f6d64e" stroke="#b8901a" stroke-width="0.800"/>
<path d="M4 5.300C3.800 1.300 5.800 0.500 7.600 0.500C9.600 0.500 11.400 1.300 11.200 5.300Z" fill="#56a9e6" stroke="#1d79b8" stroke-width="0.800"/>
<path d="M0.500 5.200C0.400 3.200 2.600 3.300 4.300 4.600C6.300 5.700 9.100 5.700 11.100 4.600C12.900 3.300 15.600 3 15.500 5C15.200 7.400 11.300 8.800 8 8.800C4.700 8.800 0.800 7.600 0.500 5.200Z" fill="#5fb2e8" stroke="#1d79b8" stroke-width="0.800"/>
<path d="M5.300 3.800C5.300 2 6.300 1.500 7.300 1.500" fill="none" stroke="#cfe8fb" stroke-width="1"/>
<path d="M12.600 8.700l3.200 3.200-3.200 3.200-3.200-3.200z" fill="#f8de62" stroke="#a88414" stroke-width="0.900"/></svg>
<div class="t" style="top:162.0px;height:16px;line-height:16px;font-size:12px;color:#000;white-space:pre;letter-spacing:-0.08px;left:93.9px;">Breakout Robot</div>
<svg style="left:72px;top:180px" width="17" height="16" viewBox="0 0 17 16"><path d="M3.600 7.400C3.600 13 11.400 13 11.400 7.400Z" fill="#f6d64e" stroke="#b8901a" stroke-width="0.800"/>
<path d="M4 5.300C3.800 1.300 5.800 0.500 7.600 0.500C9.600 0.500 11.400 1.300 11.200 5.300Z" fill="#56a9e6" stroke="#1d79b8" stroke-width="0.800"/>
<path d="M0.500 5.200C0.400 3.200 2.600 3.300 4.300 4.600C6.300 5.700 9.100 5.700 11.100 4.600C12.900 3.300 15.600 3 15.500 5C15.200 7.400 11.300 8.800 8 8.800C4.700 8.800 0.800 7.600 0.500 5.200Z" fill="#5fb2e8" stroke="#1d79b8" stroke-width="0.800"/>
<path d="M5.300 3.800C5.300 2 6.300 1.500 7.300 1.500" fill="none" stroke="#cfe8fb" stroke-width="1"/>
<path d="M12.600 8.700l3.200 3.200-3.200 3.200-3.200-3.200z" fill="#f8de62" stroke="#a88414" stroke-width="0.900"/></svg>
<div class="t" style="top:180.0px;height:16px;line-height:16px;font-size:12px;color:#000;white-space:pre;letter-spacing:-0.16px;left:93.9px;">CandleWick Sniper</div>
<svg style="left:51px;top:198px" width="17" height="16" viewBox="0 0 17 16"><path d="M3.600 7.400C3.600 13 11.400 13 11.400 7.400Z" fill="#f6d64e" stroke="#b8901a" stroke-width="0.800"/>
<path d="M4 5.300C3.800 1.300 5.800 0.500 7.600 0.500C9.600 0.500 11.400 1.300 11.200 5.300Z" fill="#56a9e6" stroke="#1d79b8" stroke-width="0.800"/>
<path d="M0.500 5.200C0.400 3.200 2.600 3.300 4.300 4.600C6.300 5.700 9.100 5.700 11.100 4.600C12.900 3.300 15.600 3 15.500 5C15.200 7.400 11.300 8.800 8 8.800C4.700 8.800 0.800 7.600 0.500 5.200Z" fill="#5fb2e8" stroke="#1d79b8" stroke-width="0.800"/>
<path d="M5.300 3.800C5.300 2 6.300 1.500 7.300 1.500" fill="none" stroke="#cfe8fb" stroke-width="1"/>
<path d="M12.600 8.700l3.200 3.200-3.200 3.200-3.200-3.200z" fill="#a9a9a9" stroke="#5e5e5e" stroke-width="0.900"/></svg>
<div class="t" style="top:198.0px;height:16px;line-height:16px;font-size:12px;color:#000;white-space:pre;letter-spacing:0.14px;left:72.9px;">Autochartist</div>
<svg style="left:51px;top:216px" width="17" height="16" viewBox="0 0 17 16"><path d="M3.600 7.400C3.600 13 11.400 13 11.400 7.400Z" fill="#f6d64e" stroke="#b8901a" stroke-width="0.800"/>
<path d="M4 5.300C3.800 1.300 5.800 0.500 7.600 0.500C9.600 0.500 11.400 1.300 11.200 5.300Z" fill="#56a9e6" stroke="#1d79b8" stroke-width="0.800"/>
<path d="M0.500 5.200C0.400 3.200 2.600 3.300 4.300 4.600C6.300 5.700 9.100 5.700 11.100 4.600C12.900 3.300 15.600 3 15.500 5C15.200 7.400 11.300 8.800 8 8.800C4.700 8.800 0.800 7.600 0.500 5.200Z" fill="#5fb2e8" stroke="#1d79b8" stroke-width="0.800"/>
<path d="M5.300 3.800C5.300 2 6.300 1.500 7.300 1.500" fill="none" stroke="#cfe8fb" stroke-width="1"/>
<path d="M12.600 8.700l3.200 3.200-3.200 3.200-3.200-3.200z" fill="#f8de62" stroke="#a88414" stroke-width="0.900"/></svg>
<div class="t" style="top:216.0px;height:16px;line-height:16px;font-size:12px;color:#000;white-space:pre;letter-spacing:-0.16px;left:72.9px;">MACD Sample</div>
<svg style="left:51px;top:234px" width="17" height="16" viewBox="0 0 17 16"><path d="M3.600 7.400C3.600 13 11.400 13 11.400 7.400Z" fill="#f6d64e" stroke="#b8901a" stroke-width="0.800"/>
<path d="M4 5.300C3.800 1.300 5.800 0.500 7.600 0.500C9.600 0.500 11.400 1.300 11.200 5.300Z" fill="#56a9e6" stroke="#1d79b8" stroke-width="0.800"/>
<path d="M0.500 5.200C0.400 3.200 2.600 3.300 4.300 4.600C6.300 5.700 9.100 5.700 11.100 4.600C12.900 3.300 15.600 3 15.500 5C15.200 7.400 11.300 8.800 8 8.800C4.700 8.800 0.800 7.600 0.500 5.200Z" fill="#5fb2e8" stroke="#1d79b8" stroke-width="0.800"/>
<path d="M5.300 3.800C5.300 2 6.300 1.500 7.300 1.500" fill="none" stroke="#cfe8fb" stroke-width="1"/>
<path d="M12.600 8.700l3.200 3.200-3.200 3.200-3.200-3.200z" fill="#f8de62" stroke="#a88414" stroke-width="0.900"/></svg>
<div class="t" style="top:234.0px;height:16px;line-height:16px;font-size:12px;color:#000;white-space:pre;letter-spacing:0.13px;left:72.9px;">Moving Average</div>
<svg style="left:51.5px;top:251.8px" width="15" height="15" viewBox="0 0 15 15">
<defs><radialGradient id="gg2" cx="0.350" cy="0.300" r="0.800"><stop offset="0" stop-color="#7cc4ff"/><stop offset="0.600" stop-color="#2f8ff0"/><stop offset="1" stop-color="#1667d6"/></radialGradient></defs>
<circle cx="7.500" cy="7.500" r="6.900" fill="url(#gg2)"/>
<path d="M2.600 3.600C3.600 2 5.600 1.300 6.800 1.600C7.600 2.400 6.600 3.200 7.200 4C7.800 5 6.200 5.400 6.400 6.600C6.600 7.800 8 8 7.600 9.400C7.300 10.600 6.800 11.600 5.600 11.400C5 10 5.300 9 4.300 8.200C3.200 7.200 2 5.600 2.600 3.600Z" fill="#ffe53a"/>
<path d="M9.800 2.600C11.600 3 13 4.800 13.200 6.600C13 8.200 12.400 9.400 11.600 10C11 9 11.200 8 10.300 7.400C9.400 6.600 9.600 5.400 9.300 4.400C9.100 3.600 9.300 3 9.800 2.600Z" fill="#ffe53a"/></svg>
<div class="t" style="top:252.0px;height:16px;line-height:16px;font-size:12px;color:#000;white-space:pre;letter-spacing:-0.19px;left:72.9px;">1136 more...</div>
<svg style="left:30px;top:270px" width="17" height="16" viewBox="0 0 17 16">
<rect x="2" y="2" width="8.300" height="8.500" fill="#f9e27a" stroke="#c9a227" stroke-width="0.700"/>
<path d="M0.400 1.400L1.600 0.300H10.800L12 1.400L10.800 2.700H1.600Z" fill="#f6d75e" stroke="#c9a227" stroke-width="0.700"/>
<path d="M0.400 10.900L1.600 9.700H8.500L9.600 10.900L8.500 12.200H1.600Z" fill="#f6d75e" stroke="#c9a227" stroke-width="0.700"/>
<path d="M4 4.800h1.500M6.800 4.800h1M4 6.800h1M6.300 6.800h1" stroke="#a08a40" stroke-width="0.900"/>
<path d="M10.700 8.100l3 3-3 3-3-3z" fill="#f8de62" stroke="#b8901a" stroke-width="0.800"/></svg>
<div class="t" style="top:270.0px;height:16px;line-height:16px;font-size:12px;color:#000;white-space:pre;letter-spacing:-0.18px;left:51.7px;">Scripts</div>
<div style="left:3px;top:284px;width:282px;height:24px;background:#f0f0f0;"></div>
<div style="left:4px;top:284px;width:279px;height:1px;background:#000;"></div>
<div style="left:6px;top:284px;width:71px;height:20px;background:#fff;border:1px solid #000;border-top:none;box-shadow:1px 1px 0 #777;"></div>
<div style="left:7px;top:284px;width:68px;height:1px;background:#fff;"></div>
<div class="t" style="top:285.8px;height:16px;line-height:16px;font-size:12px;color:#000;white-space:pre;letter-spacing:0.44px;left:15.8px;">Common</div>
<div class="t" style="top:285.8px;height:16px;line-height:16px;font-size:12px;color:#6d6d6d;white-space:pre;letter-spacing:-0.16px;left:87.0px;">Favorites</div>
<div style="left:144px;top:288px;width:1px;height:14px;background:#6d6d6d;"></div>
<div style="left:3px;top:312px;width:267px;height:13px;background:linear-gradient(90deg,#c3d1e1 0%,#cad8e7 50%,#d3e0ee 100%);"></div>
<div class="t" style="top:310.0px;height:16px;line-height:16px;font-size:12px;color:#000;white-space:pre;letter-spacing:-0.36px;left:4.5px;">Market Watch: 18:37:31</div>
<svg style="left:275px;top:315px" width="7" height="7" viewBox="0 0 7 7"><path d="M0.800 1l5 5M5.800 1l-5 5" stroke="#000" stroke-width="1.500"/></svg>
<div style="left:3px;top:326px;width:281px;height:200px;background:#fff;border-left:1px solid #a0a0a0;border-top:1px solid #a0a0a0;"></div>
<div style="left:267px;top:327px;width:17px;height:199px;background:#f0f0f0;"></div>
<div style="left:267px;top:469px;width:15px;height:40px;background:#cdcdcd;"></div>
<svg style="left:271px;top:333px" width="7" height="6" viewBox="0 0 7 6"><path d="M0.900 4.700L3.500 1.500L6.100 4.700" fill="none" stroke="#505050" stroke-width="2"/></svg>
<svg style="left:271px;top:515px" width="7" height="6" viewBox="0 0 7 6"><path d="M0.900 1.300L3.500 4.500L6.100 1.300" fill="none" stroke="#505050" stroke-width="2"/></svg>
<div style="left:103px;top:327px;width:1px;height:24px;background:#e0e0e0;"></div>
<div style="left:168px;top:327px;width:1px;height:24px;background:#e0e0e0;"></div>
<div style="left:233px;top:327px;width:1px;height:24px;background:#e0e0e0;"></div>
<div class="t" style="top:330.5px;height:16px;line-height:16px;font-size:12px;color:#000;white-space:pre;letter-spacing:0.08px;left:9.5px;">Symbol</div>
<div class="t" style="top:330.5px;height:16px;line-height:16px;font-size:12px;color:#000;white-space:pre;letter-spacing:0.15px;left:145.5px;">Bid</div>
<div class="t" style="top:330.5px;height:16px;line-height:16px;font-size:12px;color:#000;white-space:pre;letter-spacing:0.10px;left:208.5px;">Ask</div>
<div class="t" style="top:330.5px;height:16px;line-height:16px;font-size:12px;color:#000;white-space:pre;right:1106.2px;">!</div>
<div style="left:4px;top:351px;width:262px;height:20px;background:#7fffd4;"></div>
<svg style="left:7.8px;top:357.09999999999997px" width="11" height="10" viewBox="0 0 11 10"><path d="M5.500 0.600L10.500 5.800H7.800V9.500H3.200V5.800H0.500z" fill="#3ccf3c" stroke="#1a7a1a" stroke-width="0.900" stroke-linejoin="round"/><path d="M5.500 2.300L8.200 5H6.800V8.500H5V4.500z" fill="#8df08d" fill-opacity="0.700"/></svg>
<div class="t" style="top:352.7px;height:16px;line-height:16px;font-size:12px;color:#000;white-space:pre;letter-spacing:-0.68px;left:23.9px;">GBPNZD</div>
<div class="t" style="top:352.7px;height:16px;line-height:16px;font-size:11.3px;color:#0000ff;white-space:pre;right:1200.5px;letter-spacing:-0.100px;">2.11487</div>
<div class="t" style="top:352.7px;height:16px;line-height:16px;font-size:11.3px;color:#0000ff;white-space:pre;right:1135.5px;letter-spacing:-0.100px;">2.11510</div>
<div class="t" style="top:352.7px;height:16px;line-height:16px;font-size:11.3px;color:#0000ff;white-space:pre;right:1103.5px;letter-spacing:-0.100px;">23</div>
<div style="left:4px;top:371px;width:262px;height:20px;background:#7fffd4;"></div>
<svg style="left:7.8px;top:377.09999999999997px" width="11" height="10" viewBox="0 0 11 10"><path d="M5.500 0.600L10.500 5.800H7.800V9.500H3.200V5.800H0.500z" fill="#3ccf3c" stroke="#1a7a1a" stroke-width="0.900" stroke-linejoin="round"/><path d="M5.500 2.300L8.200 5H6.800V8.500H5V4.500z" fill="#8df08d" fill-opacity="0.700"/></svg>
<div class="t" style="top:372.7px;height:16px;line-height:16px;font-size:12px;color:#000;white-space:pre;letter-spacing:-0.42px;left:23.9px;">NZDCAD</div>
<div class="t" style="top:372.7px;height:16px;line-height:16px;font-size:11.3px;color:#0000ff;white-space:pre;right:1200.5px;letter-spacing:-0.100px;">0.84695</div>
<div class="t" style="top:372.7px;height:16px;line-height:16px;font-size:11.3px;color:#0000ff;white-space:pre;right:1135.5px;letter-spacing:-0.100px;">0.84712</div>
<div class="t" style="top:372.7px;height:16px;line-height:16px;font-size:11.3px;color:#0000ff;white-space:pre;right:1103.5px;letter-spacing:-0.100px;">17</div>
<div style="left:4px;top:391px;width:262px;height:20px;background:#7fffd4;"></div>
<svg style="left:7.8px;top:397.09999999999997px" width="11" height="10" viewBox="0 0 11 10"><path d="M5.500 9.500L10.500 4.300H7.800V0.600H3.200V4.300H0.500z" fill="#ff4a1a" stroke="#a82a08" stroke-width="0.900" stroke-linejoin="round"/><path d="M4.200 1.400H6V5.200H4.200z" fill="#ff9a7a" fill-opacity="0.700"/></svg>
<div class="t" style="top:392.7px;height:16px;line-height:16px;font-size:12px;color:#000;white-space:pre;letter-spacing:-0.40px;left:23.9px;">NZDCHF</div>
<div class="t" style="top:392.7px;height:16px;line-height:16px;font-size:11.3px;color:#ff0000;white-space:pre;right:1200.5px;letter-spacing:-0.100px;">0.53119</div>
<div class="t" style="top:392.7px;height:16px;line-height:16px;font-size:11.3px;color:#ff0000;white-space:pre;right:1135.5px;letter-spacing:-0.100px;">0.53133</div>
<div class="t" style="top:392.7px;height:16px;line-height:16px;font-size:11.3px;color:#ff0000;white-space:pre;right:1103.5px;letter-spacing:-0.100px;">14</div>
<div style="left:4px;top:411px;width:262px;height:20px;background:#ffa500;"></div>
<svg style="left:7.8px;top:417.09999999999997px" width="11" height="10" viewBox="0 0 11 10"><path d="M5.500 0.600L10.500 5.800H7.800V9.500H3.200V5.800H0.500z" fill="#3ccf3c" stroke="#1a7a1a" stroke-width="0.900" stroke-linejoin="round"/><path d="M5.500 2.300L8.200 5H6.800V8.500H5V4.500z" fill="#8df08d" fill-opacity="0.700"/></svg>
<div class="t" style="top:412.7px;height:16px;line-height:16px;font-size:12px;color:#000;white-space:pre;letter-spacing:-1.20px;left:23.9px;">BTCUSD</div>
<div class="t" style="top:412.7px;height:16px;line-height:16px;font-size:11.3px;color:#2a00c8;white-space:pre;right:1200.5px;letter-spacing:-0.100px;">62520.94</div>
<div class="t" style="top:412.7px;height:16px;line-height:16px;font-size:11.3px;color:#2a00c8;white-space:pre;right:1135.5px;letter-spacing:-0.100px;">62535.94</div>
<div class="t" style="top:412.7px;height:16px;line-height:16px;font-size:11.3px;color:#2a00c8;white-space:pre;right:1103.5px;letter-spacing:-0.100px;">1500</div>
<div style="left:4px;top:431px;width:262px;height:20px;background:#7fffd4;"></div>
<svg style="left:7.8px;top:437.09999999999997px" width="11" height="10" viewBox="0 0 11 10"><path d="M5.500 0.600L10.500 5.800H7.800V9.500H3.200V5.800H0.500z" fill="#3ccf3c" stroke="#1a7a1a" stroke-width="0.900" stroke-linejoin="round"/><path d="M5.500 2.300L8.200 5H6.800V8.500H5V4.500z" fill="#8df08d" fill-opacity="0.700"/></svg>
<div class="t" style="top:432.7px;height:16px;line-height:16px;font-size:12px;color:#000;white-space:pre;letter-spacing:-1.20px;left:23.9px;">SEKJPY</div>
<div class="t" style="top:432.7px;height:16px;line-height:16px;font-size:11.3px;color:#0000ff;white-space:pre;right:1200.5px;letter-spacing:-0.100px;">13.977</div>
<div class="t" style="top:432.7px;height:16px;line-height:16px;font-size:11.3px;color:#0000ff;white-space:pre;right:1135.5px;letter-spacing:-0.100px;">13.991</div>
<div class="t" style="top:432.7px;height:16px;line-height:16px;font-size:11.3px;color:#0000ff;white-space:pre;right:1103.5px;letter-spacing:-0.100px;">14</div>
<div style="left:4px;top:451px;width:262px;height:20px;background:#0078d7;"></div>
<svg style="left:7.8px;top:457.09999999999997px" width="11" height="10" viewBox="0 0 11 10"><path d="M5.500 0.600L10.500 5.800H7.800V9.500H3.200V5.800H0.500z" fill="#3ccf3c" stroke="#1a7a1a" stroke-width="0.900" stroke-linejoin="round"/><path d="M5.500 2.300L8.200 5H6.800V8.500H5V4.500z" fill="#8df08d" fill-opacity="0.700"/></svg>
<div class="t" style="top:452.7px;height:16px;line-height:16px;font-size:12px;color:#fff;white-space:pre;letter-spacing:-0.74px;left:23.9px;">XAUUSD</div>
<div class="t" style="top:452.7px;height:16px;line-height:16px;font-size:11.3px;color:#fff;white-space:pre;right:1200.5px;letter-spacing:-0.100px;">2662.35</div>
<div class="t" style="top:452.7px;height:16px;line-height:16px;font-size:11.3px;color:#fff;white-space:pre;right:1135.5px;letter-spacing:-0.100px;">2662.50</div>
<div class="t" style="top:452.7px;height:16px;line-height:16px;font-size:11.3px;color:#fff;white-space:pre;right:1103.5px;letter-spacing:-0.100px;">15</div>
<div style="left:4px;top:471px;width:262px;height:20px;background:#00bfff;"></div>
<svg style="left:7.8px;top:477.09999999999997px" width="11" height="10" viewBox="0 0 11 10"><path d="M5.500 0.600L10.500 5.800H7.800V9.500H3.200V5.800H0.500z" fill="#3ccf3c" stroke="#1a7a1a" stroke-width="0.900" stroke-linejoin="round"/><path d="M5.500 2.300L8.200 5H6.800V8.500H5V4.500z" fill="#8df08d" fill-opacity="0.700"/></svg>
<div class="t" style="top:472.7px;height:16px;line-height:16px;font-size:12px;color:#000;white-space:pre;letter-spacing:-0.98px;left:23.9px;">US30</div>
<div class="t" style="top:472.7px;height:16px;line-height:16px;font-size:11.3px;color:#0000ff;white-space:pre;right:1200.5px;letter-spacing:-0.100px;">42161.89</div>
<div class="t" style="top:472.7px;height:16px;line-height:16px;font-size:11.3px;color:#0000ff;white-space:pre;right:1135.5px;letter-spacing:-0.100px;">42162.59</div>
<div class="t" style="top:472.7px;height:16px;line-height:16px;font-size:11.3px;color:#0000ff;white-space:pre;right:1103.5px;letter-spacing:-0.100px;">70</div>
<div style="left:4px;top:491px;width:262px;height:20px;background:#00bfff;"></div>
<svg style="left:7.8px;top:497.09999999999997px" width="11" height="10" viewBox="0 0 11 10"><path d="M5.500 9.500L10.500 4.300H7.800V0.600H3.200V4.300H0.500z" fill="#ff4a1a" stroke="#a82a08" stroke-width="0.900" stroke-linejoin="round"/><path d="M4.200 1.400H6V5.200H4.200z" fill="#ff9a7a" fill-opacity="0.700"/></svg>
<div class="t" style="top:492.7px;height:16px;line-height:16px;font-size:12px;color:#000;white-space:pre;letter-spacing:-0.70px;left:23.9px;">IT40</div>
<div class="t" style="top:492.7px;height:16px;line-height:16px;font-size:11.3px;color:#e0102a;white-space:pre;right:1200.5px;letter-spacing:-0.100px;">33782.20</div>
<div class="t" style="top:492.7px;height:16px;line-height:16px;font-size:11.3px;color:#e0102a;white-space:pre;right:1135.5px;letter-spacing:-0.100px;">33791.20</div>
<div class="t" style="top:492.7px;height:16px;line-height:16px;font-size:11.3px;color:#e0102a;white-space:pre;right:1103.5px;letter-spacing:-0.100px;">900</div>
<div style="left:4px;top:371px;width:262px;height:1px;background:#c0c0c0;"></div>
<div style="left:4px;top:391px;width:262px;height:1px;background:#c0c0c0;"></div>
<div style="left:4px;top:411px;width:262px;height:1px;background:#c0c0c0;"></div>
<div style="left:4px;top:431px;width:262px;height:1px;background:#c0c0c0;"></div>
<div style="left:4px;top:451px;width:262px;height:1px;background:#c0c0c0;"></div>
<div style="left:4px;top:471px;width:262px;height:1px;background:#c0c0c0;"></div>
<div style="left:4px;top:491px;width:262px;height:1px;background:#c0c0c0;"></div>
<div style="left:4px;top:511px;width:262px;height:1px;background:#c0c0c0;"></div>
<div style="left:102px;top:351px;width:1px;height:160px;background:#c0c0c0;"></div>
<div style="left:167px;top:351px;width:1px;height:160px;background:#c0c0c0;"></div>
<div style="left:232px;top:351px;width:1px;height:160px;background:#c0c0c0;"></div>
<div style="left:4px;top:526px;width:279px;height:1px;background:#000;"></div>
<div style="left:6px;top:526px;width:65px;height:20px;background:#fff;border:1px solid #000;border-top:none;box-shadow:1px 1px 0 #777;"></div>
<div style="left:7px;top:526px;width:62px;height:1px;background:#fff;"></div>
<div class="t" style="top:527.8px;height:16px;line-height:16px;font-size:12px;color:#000;white-space:pre;letter-spacing:-0.16px;left:16.0px;">Symbols</div>
<div class="t" style="top:527.8px;height:16px;line-height:16px;font-size:12px;color:#6d6d6d;white-space:pre;letter-spacing:-0.14px;left:81.2px;">Tick Chart</div>
<div style="left:144px;top:530px;width:1px;height:14px;background:#6d6d6d;"></div>
<div style="left:284px;top:72px;width:1px;height:235px;background:#fff;"></div>
<div style="left:0px;top:306px;width:285px;height:1px;background:#fff;"></div>
<div style="left:3px;top:284px;width:1px;height:22px;background:#a0a0a0;"></div>
<div style="left:3px;top:526px;width:1px;height:22px;background:#a0a0a0;"></div>
<div style="left:0px;top:309px;width:287px;height:1px;background:#a0a0a0;"></div>
<div style="left:0px;top:310px;width:287px;height:1px;background:#fff;"></div>
<div style="left:284px;top:311px;width:1px;height:238px;background:#fff;"></div>
<div style="left:0px;top:548px;width:285px;height:1px;background:#fff;"></div>
<div style="left:0px;top:71px;width:287px;height:1px;background:#fbfbfb;"></div>
<div style="left:287px;top:71px;width:1px;height:481px;background:#a0a0a0;"></div>
<div style="left:288px;top:71px;width:1px;height:481px;background:#696969;"></div>
<div style="left:288px;top:71px;width:1078px;height:1px;background:#696969;"></div>
<div style="left:289px;top:72px;width:1075px;height:459px;background:#fff;"></div>
<div style="left:1364px;top:72px;width:1px;height:460px;background:#e3e3e3;"></div>
<svg style="left:0;top:0" width="1366" height="535" viewBox="0 0 1366 535" shape-rendering="crispEdges"><defs><clipPath id="cc"><rect x="292" y="75" width="1026" height="434"/></clipPath></defs><rect x="292" y="222" width="1026" height="1" fill="#c0c0c0"/><g clip-path="url(#cc)"><rect x="292" y="446" width="1" height="22" fill="#000"/><rect x="290" y="454" width="5" height="7" fill="#000"/><rect x="291" y="455" width="3" height="5" fill="#fff"/><rect x="300" y="451" width="1" height="31" fill="#000"/><rect x="298" y="453" width="5" height="26" fill="#000"/><rect x="308" y="475" width="1" height="21" fill="#000"/><rect x="306" y="477" width="5" height="15" fill="#000"/><rect x="316" y="475" width="1" height="19" fill="#000"/><rect x="314" y="482" width="5" height="11" fill="#000"/><rect x="315" y="483" width="3" height="9" fill="#fff"/><rect x="324" y="471" width="1" height="20" fill="#000"/><rect x="322" y="479" width="5" height="7" fill="#000"/><rect x="332" y="472" width="1" height="18" fill="#000"/><rect x="330" y="481" width="5" height="5" fill="#000"/><rect x="331" y="482" width="3" height="3" fill="#fff"/><rect x="340" y="469" width="1" height="29" fill="#000"/><rect x="338" y="469" width="5" height="13" fill="#000"/><rect x="339" y="470" width="3" height="11" fill="#fff"/><rect x="348" y="461" width="1" height="24" fill="#000"/><rect x="346" y="466" width="5" height="4" fill="#000"/><rect x="347" y="467" width="3" height="2" fill="#fff"/><rect x="356" y="452" width="1" height="20" fill="#000"/><rect x="354" y="463" width="5" height="4" fill="#000"/><rect x="355" y="464" width="3" height="2" fill="#fff"/><rect x="364" y="443" width="1" height="23" fill="#000"/><rect x="362" y="444" width="5" height="19" fill="#000"/><rect x="363" y="445" width="3" height="17" fill="#fff"/><rect x="372" y="421" width="1" height="29" fill="#000"/><rect x="370" y="444" width="5" height="2" fill="#000"/><rect x="380" y="429" width="1" height="32" fill="#000"/><rect x="378" y="445" width="5" height="15" fill="#000"/><rect x="388" y="454" width="1" height="10" fill="#000"/><rect x="386" y="459" width="5" height="3" fill="#000"/><rect x="396" y="451" width="1" height="13" fill="#000"/><rect x="394" y="460" width="5" height="2" fill="#000"/><rect x="404" y="460" width="1" height="27" fill="#000"/><rect x="402" y="462" width="5" height="18" fill="#000"/><rect x="412" y="462" width="1" height="27" fill="#000"/><rect x="410" y="468" width="5" height="12" fill="#000"/><rect x="411" y="469" width="3" height="10" fill="#fff"/><rect x="420" y="454" width="1" height="20" fill="#000"/><rect x="418" y="459" width="5" height="10" fill="#000"/><rect x="419" y="460" width="3" height="8" fill="#fff"/><rect x="428" y="450" width="1" height="16" fill="#000"/><rect x="426" y="455" width="5" height="5" fill="#000"/><rect x="427" y="456" width="3" height="3" fill="#fff"/><rect x="436" y="450" width="1" height="16" fill="#000"/><rect x="434" y="455" width="5" height="9" fill="#000"/><rect x="444" y="453" width="1" height="16" fill="#000"/><rect x="442" y="458" width="5" height="7" fill="#000"/><rect x="443" y="459" width="3" height="5" fill="#fff"/><rect x="452" y="454" width="1" height="9" fill="#000"/><rect x="450" y="457" width="5" height="2" fill="#000"/><rect x="460" y="457" width="1" height="10" fill="#000"/><rect x="458" y="457" width="5" height="2" fill="#000"/><rect x="468" y="432" width="1" height="30" fill="#000"/><rect x="466" y="433" width="5" height="25" fill="#000"/><rect x="467" y="434" width="3" height="23" fill="#fff"/><rect x="476" y="422" width="1" height="18" fill="#000"/><rect x="474" y="433" width="5" height="6" fill="#000"/><rect x="484" y="423" width="1" height="26" fill="#000"/><rect x="482" y="432" width="5" height="6" fill="#000"/><rect x="483" y="433" width="3" height="4" fill="#fff"/><rect x="492" y="419" width="1" height="16" fill="#000"/><rect x="490" y="426" width="5" height="6" fill="#000"/><rect x="491" y="427" width="3" height="4" fill="#fff"/><rect x="500" y="408" width="1" height="19" fill="#000"/><rect x="498" y="416" width="5" height="11" fill="#000"/><rect x="499" y="417" width="3" height="9" fill="#fff"/><rect x="508" y="414" width="1" height="12" fill="#000"/><rect x="506" y="415" width="5" height="4" fill="#000"/><rect x="516" y="417" width="1" height="16" fill="#000"/><rect x="514" y="418" width="5" height="9" fill="#000"/><rect x="524" y="401" width="1" height="29" fill="#000"/><rect x="522" y="403" width="5" height="23" fill="#000"/><rect x="523" y="404" width="3" height="21" fill="#fff"/><rect x="532" y="400" width="1" height="16" fill="#000"/><rect x="530" y="403" width="5" height="11" fill="#000"/><rect x="540" y="414" width="1" height="19" fill="#000"/><rect x="538" y="414" width="5" height="15" fill="#000"/><rect x="548" y="409" width="1" height="31" fill="#000"/><rect x="546" y="411" width="5" height="17" fill="#000"/><rect x="547" y="412" width="3" height="15" fill="#fff"/><rect x="556" y="400" width="1" height="24" fill="#000"/><rect x="554" y="410" width="5" height="2" fill="#000"/><rect x="564" y="396" width="1" height="16" fill="#000"/><rect x="562" y="404" width="5" height="7" fill="#000"/><rect x="563" y="405" width="3" height="5" fill="#fff"/><rect x="572" y="394" width="1" height="14" fill="#000"/><rect x="570" y="400" width="5" height="5" fill="#000"/><rect x="571" y="401" width="3" height="3" fill="#fff"/><rect x="580" y="386" width="1" height="16" fill="#000"/><rect x="578" y="396" width="5" height="5" fill="#000"/><rect x="579" y="397" width="3" height="3" fill="#fff"/><rect x="588" y="386" width="1" height="13" fill="#000"/><rect x="586" y="391" width="5" height="5" fill="#000"/><rect x="587" y="392" width="3" height="3" fill="#fff"/><rect x="596" y="390" width="1" height="11" fill="#000"/><rect x="594" y="392" width="5" height="2" fill="#000"/><rect x="604" y="385" width="1" height="14" fill="#000"/><rect x="602" y="392" width="5" height="1" fill="#000"/><rect x="612" y="380" width="1" height="20" fill="#000"/><rect x="610" y="392" width="5" height="8" fill="#000"/><rect x="620" y="392" width="1" height="12" fill="#000"/><rect x="618" y="396" width="5" height="4" fill="#000"/><rect x="619" y="397" width="3" height="2" fill="#fff"/><rect x="628" y="397" width="1" height="14" fill="#000"/><rect x="626" y="397" width="5" height="5" fill="#000"/><rect x="636" y="398" width="1" height="12" fill="#000"/><rect x="634" y="400" width="5" height="2" fill="#000"/><rect x="644" y="394" width="1" height="10" fill="#000"/><rect x="642" y="396" width="5" height="5" fill="#000"/><rect x="643" y="397" width="3" height="3" fill="#fff"/><rect x="652" y="392" width="1" height="13" fill="#000"/><rect x="650" y="396" width="5" height="8" fill="#000"/><rect x="660" y="382" width="1" height="22" fill="#000"/><rect x="658" y="382" width="5" height="22" fill="#000"/><rect x="659" y="383" width="3" height="20" fill="#fff"/><rect x="668" y="376" width="1" height="20" fill="#000"/><rect x="666" y="382" width="5" height="3" fill="#000"/><rect x="676" y="367" width="1" height="20" fill="#000"/><rect x="674" y="376" width="5" height="9" fill="#000"/><rect x="675" y="377" width="3" height="7" fill="#fff"/><rect x="684" y="363" width="1" height="16" fill="#000"/><rect x="682" y="368" width="5" height="9" fill="#000"/><rect x="683" y="369" width="3" height="7" fill="#fff"/><rect x="692" y="364" width="1" height="17" fill="#000"/><rect x="690" y="368" width="5" height="9" fill="#000"/><rect x="700" y="375" width="1" height="27" fill="#000"/><rect x="698" y="376" width="5" height="24" fill="#000"/><rect x="708" y="399" width="1" height="18" fill="#000"/><rect x="706" y="399" width="5" height="15" fill="#000"/><rect x="716" y="406" width="1" height="23" fill="#000"/><rect x="714" y="412" width="5" height="13" fill="#000"/><rect x="724" y="400" width="1" height="25" fill="#000"/><rect x="722" y="403" width="5" height="22" fill="#000"/><rect x="723" y="404" width="3" height="20" fill="#fff"/><rect x="732" y="399" width="1" height="20" fill="#000"/><rect x="730" y="402" width="5" height="5" fill="#000"/><rect x="740" y="381" width="1" height="30" fill="#000"/><rect x="738" y="381" width="5" height="26" fill="#000"/><rect x="739" y="382" width="3" height="24" fill="#fff"/><rect x="748" y="359" width="1" height="31" fill="#000"/><rect x="746" y="363" width="5" height="19" fill="#000"/><rect x="747" y="364" width="3" height="17" fill="#fff"/><rect x="756" y="362" width="1" height="27" fill="#000"/><rect x="754" y="363" width="5" height="22" fill="#000"/><rect x="764" y="355" width="1" height="30" fill="#000"/><rect x="762" y="363" width="5" height="22" fill="#000"/><rect x="763" y="364" width="3" height="20" fill="#fff"/><rect x="772" y="335" width="1" height="30" fill="#000"/><rect x="770" y="340" width="5" height="24" fill="#000"/><rect x="771" y="341" width="3" height="22" fill="#fff"/><rect x="780" y="317" width="1" height="31" fill="#000"/><rect x="778" y="329" width="5" height="12" fill="#000"/><rect x="779" y="330" width="3" height="10" fill="#fff"/><rect x="788" y="315" width="1" height="25" fill="#000"/><rect x="786" y="325" width="5" height="5" fill="#000"/><rect x="787" y="326" width="3" height="3" fill="#fff"/><rect x="796" y="304" width="1" height="25" fill="#000"/><rect x="794" y="306" width="5" height="22" fill="#000"/><rect x="795" y="307" width="3" height="20" fill="#fff"/><rect x="804" y="298" width="1" height="36" fill="#000"/><rect x="802" y="306" width="5" height="4" fill="#000"/><rect x="812" y="308" width="1" height="32" fill="#000"/><rect x="810" y="308" width="5" height="30" fill="#000"/><rect x="820" y="324" width="1" height="22" fill="#000"/><rect x="818" y="337" width="5" height="4" fill="#000"/><rect x="828" y="316" width="1" height="26" fill="#000"/><rect x="826" y="335" width="5" height="6" fill="#000"/><rect x="827" y="336" width="3" height="4" fill="#fff"/><rect x="836" y="329" width="1" height="19" fill="#000"/><rect x="834" y="331" width="5" height="6" fill="#000"/><rect x="835" y="332" width="3" height="4" fill="#fff"/><rect x="844" y="319" width="1" height="32" fill="#000"/><rect x="842" y="331" width="5" height="18" fill="#000"/><rect x="852" y="341" width="1" height="37" fill="#000"/><rect x="850" y="347" width="5" height="21" fill="#000"/><rect x="860" y="360" width="1" height="25" fill="#000"/><rect x="858" y="366" width="5" height="14" fill="#000"/><rect x="868" y="376" width="1" height="38" fill="#000"/><rect x="866" y="379" width="5" height="31" fill="#000"/><rect x="876" y="376" width="1" height="36" fill="#000"/><rect x="874" y="386" width="5" height="24" fill="#000"/><rect x="875" y="387" width="3" height="22" fill="#fff"/><rect x="884" y="366" width="1" height="29" fill="#000"/><rect x="882" y="372" width="5" height="15" fill="#000"/><rect x="883" y="373" width="3" height="13" fill="#fff"/><rect x="892" y="352" width="1" height="23" fill="#000"/><rect x="890" y="352" width="5" height="20" fill="#000"/><rect x="891" y="353" width="3" height="18" fill="#fff"/><rect x="900" y="332" width="1" height="33" fill="#000"/><rect x="898" y="334" width="5" height="19" fill="#000"/><rect x="899" y="335" width="3" height="17" fill="#fff"/><rect x="908" y="180" width="1" height="175" fill="#000"/><rect x="906" y="206" width="5" height="131" fill="#000"/><rect x="907" y="207" width="3" height="129" fill="#fff"/><rect x="916" y="145" width="1" height="92" fill="#000"/><rect x="914" y="209" width="5" height="22" fill="#000"/><rect x="924" y="156" width="1" height="85" fill="#000"/><rect x="922" y="219" width="5" height="12" fill="#000"/><rect x="923" y="220" width="3" height="10" fill="#fff"/><rect x="932" y="154" width="1" height="75" fill="#000"/><rect x="930" y="157" width="5" height="63" fill="#000"/><rect x="931" y="158" width="3" height="61" fill="#fff"/><rect x="940" y="111" width="1" height="76" fill="#000"/><rect x="938" y="116" width="5" height="41" fill="#000"/><rect x="939" y="117" width="3" height="39" fill="#fff"/><rect x="948" y="97" width="1" height="55" fill="#000"/><rect x="946" y="116" width="5" height="30" fill="#000"/><rect x="956" y="122" width="1" height="79" fill="#000"/><rect x="954" y="145" width="5" height="32" fill="#000"/><rect x="964" y="147" width="1" height="50" fill="#000"/><rect x="962" y="176" width="5" height="12" fill="#000"/><rect x="972" y="149" width="1" height="86" fill="#000"/><rect x="970" y="175" width="5" height="14" fill="#000"/><rect x="971" y="176" width="3" height="12" fill="#fff"/><rect x="980" y="172" width="1" height="117" fill="#000"/><rect x="978" y="175" width="5" height="93" fill="#000"/><rect x="988" y="209" width="1" height="71" fill="#000"/><rect x="986" y="228" width="5" height="40" fill="#000"/><rect x="987" y="229" width="3" height="38" fill="#fff"/><rect x="996" y="180" width="1" height="54" fill="#000"/><rect x="994" y="183" width="5" height="46" fill="#000"/><rect x="995" y="184" width="3" height="44" fill="#fff"/><rect x="1004" y="172" width="1" height="46" fill="#000"/><rect x="1002" y="183" width="5" height="5" fill="#000"/><rect x="1012" y="187" width="1" height="59" fill="#000"/><rect x="1010" y="187" width="5" height="47" fill="#000"/><rect x="1020" y="204" width="1" height="32" fill="#000"/><rect x="1018" y="215" width="5" height="19" fill="#000"/><rect x="1019" y="216" width="3" height="17" fill="#fff"/><rect x="1028" y="195" width="1" height="49" fill="#000"/><rect x="1026" y="214" width="5" height="18" fill="#000"/><rect x="1036" y="218" width="1" height="36" fill="#000"/><rect x="1034" y="231" width="5" height="12" fill="#000"/><rect x="1044" y="245" width="1" height="31" fill="#000"/><rect x="1042" y="245" width="5" height="20" fill="#000"/><rect x="1052" y="253" width="1" height="29" fill="#000"/><rect x="1050" y="264" width="5" height="2" fill="#000"/><rect x="1060" y="240" width="1" height="92" fill="#000"/><rect x="1058" y="264" width="5" height="68" fill="#000"/><rect x="1068" y="242" width="1" height="94" fill="#000"/><rect x="1066" y="247" width="5" height="85" fill="#000"/><rect x="1067" y="248" width="3" height="83" fill="#fff"/><rect x="1076" y="202" width="1" height="50" fill="#000"/><rect x="1074" y="205" width="5" height="42" fill="#000"/><rect x="1075" y="206" width="3" height="40" fill="#fff"/><rect x="1084" y="198" width="1" height="24" fill="#000"/><rect x="1082" y="199" width="5" height="7" fill="#000"/><rect x="1083" y="200" width="3" height="5" fill="#fff"/><rect x="1092" y="181" width="1" height="21" fill="#000"/><rect x="1090" y="186" width="5" height="14" fill="#000"/><rect x="1091" y="187" width="3" height="12" fill="#fff"/><rect x="1100" y="183" width="1" height="44" fill="#000"/><rect x="1098" y="186" width="5" height="11" fill="#000"/><rect x="1108" y="191" width="1" height="33" fill="#000"/><rect x="1106" y="196" width="5" height="27" fill="#000"/></g><rect x="905" y="296" width="7" height="1" fill="#ff0000"/><rect x="913" y="169" width="7" height="1" fill="#ff0000"/><rect x="921" y="190" width="7" height="1" fill="#ff0000"/><rect x="969" y="149" width="7" height="1" fill="#ff0000"/><rect x="953" y="185" width="7" height="1" fill="#ff0000"/><rect x="977" y="215" width="7" height="1" fill="#ff0000"/><rect x="1097" y="226" width="7" height="1" fill="#ff0000"/><rect x="921" y="310" width="7" height="1" fill="#0000ff"/><rect x="913" y="289" width="7" height="1" fill="#0000ff"/><rect x="905" y="416" width="7" height="1" fill="#0000ff"/><rect x="977" y="95" width="7" height="1" fill="#0000ff"/><rect x="969" y="269" width="7" height="1" fill="#0000ff"/><rect x="1097" y="106" width="7" height="1" fill="#0000ff"/><rect x="902" y="332.8" width="4" height="5.400" fill="#fff" shape-rendering="auto"/><path d="M904.5 331.7L910.8 336.8L904.5 341.9z" fill="#fff" shape-rendering="auto"/><path d="M903 335.2h2.300v-2.500L909.3 336.5L905.3 340.3v-2.500H903z" fill="#ff0000" shape-rendering="auto"/><rect x="910" y="205.8" width="4" height="5.400" fill="#fff" shape-rendering="auto"/><path d="M912.5 204.7L918.8 209.8L912.5 214.9z" fill="#fff" shape-rendering="auto"/><path d="M911 208.2h2.300v-2.500L917.3 209.5L913.3 213.3v-2.500H911z" fill="#ff0000" shape-rendering="auto"/><rect x="918" y="226.8" width="4" height="5.400" fill="#fff" shape-rendering="auto"/><path d="M920.5 225.7L926.8 230.8L920.5 235.9z" fill="#fff" shape-rendering="auto"/><path d="M919 229.2h2.300v-2.500L925.3 230.5L921.3 234.3v-2.500H919z" fill="#ff0000" shape-rendering="auto"/><rect x="966" y="185.8" width="4" height="5.400" fill="#fff" shape-rendering="auto"/><path d="M968.5 184.7L974.8 189.8L968.5 194.9z" fill="#fff" shape-rendering="auto"/><path d="M967 188.2h2.300v-2.500L973.3 189.5L969.3 193.3v-2.500H967z" fill="#ff0000" shape-rendering="auto"/><rect x="950" y="141.8" width="4" height="5.400" fill="#fff" shape-rendering="auto"/><path d="M952.5 140.7L958.8 145.8L952.5 150.9z" fill="#fff" shape-rendering="auto"/><path d="M951 144.2h2.300v-2.500L957.3 145.5L953.3 149.3v-2.500H951z" fill="#008000" shape-rendering="auto"/><rect x="974" y="171.8" width="4" height="5.400" fill="#fff" shape-rendering="auto"/><path d="M976.5 170.7L982.8 175.8L976.5 180.9z" fill="#fff" shape-rendering="auto"/><path d="M975 174.2h2.300v-2.500L981.3 175.5L977.3 179.3v-2.500H975z" fill="#008000" shape-rendering="auto"/><rect x="1094" y="182.8" width="4" height="5.400" fill="#fff" shape-rendering="auto"/><path d="M1096.5 181.7L1102.8 186.8L1096.5 191.9z" fill="#fff" shape-rendering="auto"/><path d="M1095 185.2h2.300v-2.500L1101.3 186.5L1097.3 190.3v-2.500H1095z" fill="#008000" shape-rendering="auto"/><rect x="291" y="74" width="1028" height="1" fill="#000"/><rect x="291" y="74" width="1" height="436" fill="#000"/><rect x="1318" y="74" width="1" height="436" fill="#000"/><rect x="291" y="509" width="1028" height="1" fill="#000"/><path d="M1106 75h11l-5.500 5z" fill="#c0c0c0" shape-rendering="auto"/><path d="M292 503v6h6z" fill="#c0c0c0" shape-rendering="auto"/><rect x="1319" y="77" width="2" height="1" fill="#000"/><rect x="1319" y="110" width="2" height="1" fill="#000"/><rect x="1319" y="143" width="2" height="1" fill="#000"/><rect x="1319" y="176" width="2" height="1" fill="#000"/><rect x="1319" y="209" width="2" height="1" fill="#000"/><rect x="1319" y="242" width="2" height="1" fill="#000"/><rect x="1319" y="275" width="2" height="1" fill="#000"/><rect x="1319" y="308" width="2" height="1" fill="#000"/><rect x="1319" y="341" width="2" height="1" fill="#000"/><rect x="1319" y="374" width="2" height="1" fill="#000"/><rect x="1319" y="407" width="2" height="1" fill="#000"/><rect x="1319" y="440" width="2" height="1" fill="#000"/><rect x="1319" y="473" width="2" height="1" fill="#000"/><rect x="1319" y="506" width="2" height="1" fill="#000"/><rect x="292" y="510" width="1" height="3" fill="#000"/><rect x="356" y="510" width="1" height="3" fill="#000"/><rect x="420" y="510" width="1" height="3" fill="#000"/><rect x="484" y="510" width="1" height="3" fill="#000"/><rect x="548" y="510" width="1" height="3" fill="#000"/><rect x="612" y="510" width="1" height="3" fill="#000"/><rect x="676" y="510" width="1" height="3" fill="#000"/><rect x="740" y="510" width="1" height="3" fill="#000"/><rect x="804" y="510" width="1" height="3" fill="#000"/><rect x="868" y="510" width="1" height="3" fill="#000"/><rect x="932" y="510" width="1" height="3" fill="#000"/><rect x="996" y="510" width="1" height="3" fill="#000"/><rect x="1060" y="510" width="1" height="3" fill="#000"/><rect x="1320" y="217" width="41" height="11" fill="#000"/><path d="M295 81h7l-3.500 4z" fill="#000" shape-rendering="auto"/><g shape-rendering="auto" fill="none" stroke="#000" stroke-width="0.900"><circle cx="1307.500" cy="84.300" r="5.300"/><path d="M1304.800 86c1.200 1.800 4.200 1.800 5.400 0"/></g><rect x="1305" y="82" width="1" height="2" fill="#000"/><rect x="1309" y="82" width="1" height="2" fill="#000"/></svg>
<div class="t" style="top:71.3px;height:12px;line-height:12px;font-size:9.3px;color:#000;white-space:pre;letter-spacing:0.03px;left:1323.5px;-webkit-text-stroke:0.1px #000;">2673.25</div>
<div class="t" style="top:104.3px;height:12px;line-height:12px;font-size:9.3px;color:#000;white-space:pre;letter-spacing:0.03px;left:1323.5px;-webkit-text-stroke:0.1px #000;">2670.80</div>
<div class="t" style="top:137.3px;height:12px;line-height:12px;font-size:9.3px;color:#000;white-space:pre;letter-spacing:0.03px;left:1323.5px;-webkit-text-stroke:0.1px #000;">2668.30</div>
<div class="t" style="top:170.3px;height:12px;line-height:12px;font-size:9.3px;color:#000;white-space:pre;letter-spacing:0.03px;left:1323.5px;-webkit-text-stroke:0.1px #000;">2665.85</div>
<div class="t" style="top:203.3px;height:12px;line-height:12px;font-size:9.3px;color:#000;white-space:pre;letter-spacing:0.03px;left:1323.5px;-webkit-text-stroke:0.1px #000;">2663.35</div>
<div class="t" style="top:236.3px;height:12px;line-height:12px;font-size:9.3px;color:#000;white-space:pre;letter-spacing:0.03px;left:1323.5px;-webkit-text-stroke:0.1px #000;">2660.90</div>
<div class="t" style="top:269.3px;height:12px;line-height:12px;font-size:9.3px;color:#000;white-space:pre;letter-spacing:0.03px;left:1323.5px;-webkit-text-stroke:0.1px #000;">2658.40</div>
<div class="t" style="top:302.3px;height:12px;line-height:12px;font-size:9.3px;color:#000;white-space:pre;letter-spacing:0.03px;left:1323.5px;-webkit-text-stroke:0.1px #000;">2655.95</div>
<div class="t" style="top:335.3px;height:12px;line-height:12px;font-size:9.3px;color:#000;white-space:pre;letter-spacing:0.03px;left:1323.5px;-webkit-text-stroke:0.1px #000;">2653.45</div>
<div class="t" style="top:368.3px;height:12px;line-height:12px;font-size:9.3px;color:#000;white-space:pre;letter-spacing:0.03px;left:1323.5px;-webkit-text-stroke:0.1px #000;">2651.00</div>
<div class="t" style="top:401.3px;height:12px;line-height:12px;font-size:9.3px;color:#000;white-space:pre;letter-spacing:0.03px;left:1323.5px;-webkit-text-stroke:0.1px #000;">2648.50</div>
<div class="t" style="top:434.3px;height:12px;line-height:12px;font-size:9.3px;color:#000;white-space:pre;letter-spacing:0.03px;left:1323.5px;-webkit-text-stroke:0.1px #000;">2646.05</div>
<div class="t" style="top:467.3px;height:12px;line-height:12px;font-size:9.3px;color:#000;white-space:pre;letter-spacing:0.03px;left:1323.5px;-webkit-text-stroke:0.1px #000;">2643.55</div>
<div class="t" style="top:500.3px;height:12px;line-height:12px;font-size:9.3px;color:#000;white-space:pre;letter-spacing:0.03px;left:1323.5px;-webkit-text-stroke:0.1px #000;">2641.10</div>
<div class="t" style="top:216.1px;height:12px;line-height:12px;font-size:9.3px;color:#fff;white-space:pre;letter-spacing:0.03px;left:1323.5px;-webkit-text-stroke:0.1px #fff;">2662.40</div>
<div class="t" style="top:512.5px;height:12px;line-height:12px;font-size:9.3px;color:#000;white-space:pre;letter-spacing:0.05px;left:291.2px;-webkit-text-stroke:0.1px #000;">1 Oct 2024</div>
<div class="t" style="top:512.5px;height:12px;line-height:12px;font-size:9.3px;color:#000;white-space:pre;letter-spacing:0.11px;left:355.2px;-webkit-text-stroke:0.1px #000;">1 Oct 10:45</div>
<div class="t" style="top:512.5px;height:12px;line-height:12px;font-size:9.3px;color:#000;white-space:pre;letter-spacing:0.17px;left:419.2px;-webkit-text-stroke:0.1px #000;">1 Oct 11:25</div>
<div class="t" style="top:512.5px;height:12px;line-height:12px;font-size:9.3px;color:#000;white-space:pre;letter-spacing:0.11px;left:483.2px;-webkit-text-stroke:0.1px #000;">1 Oct 12:05</div>
<div class="t" style="top:512.5px;height:12px;line-height:12px;font-size:9.3px;color:#000;white-space:pre;letter-spacing:0.11px;left:547.2px;-webkit-text-stroke:0.1px #000;">1 Oct 12:45</div>
<div class="t" style="top:512.5px;height:12px;line-height:12px;font-size:9.3px;color:#000;white-space:pre;letter-spacing:0.11px;left:611.2px;-webkit-text-stroke:0.1px #000;">1 Oct 13:25</div>
<div class="t" style="top:512.5px;height:12px;line-height:12px;font-size:9.3px;color:#000;white-space:pre;letter-spacing:0.11px;left:675.2px;-webkit-text-stroke:0.1px #000;">1 Oct 14:05</div>
<div class="t" style="top:512.5px;height:12px;line-height:12px;font-size:9.3px;color:#000;white-space:pre;letter-spacing:0.11px;left:739.2px;-webkit-text-stroke:0.1px #000;">1 Oct 14:45</div>
<div class="t" style="top:512.5px;height:12px;line-height:12px;font-size:9.3px;color:#000;white-space:pre;letter-spacing:0.11px;left:803.2px;-webkit-text-stroke:0.1px #000;">1 Oct 15:25</div>
<div class="t" style="top:512.5px;height:12px;line-height:12px;font-size:9.3px;color:#000;white-space:pre;letter-spacing:0.11px;left:867.2px;-webkit-text-stroke:0.1px #000;">1 Oct 16:05</div>
<div class="t" style="top:512.5px;height:12px;line-height:12px;font-size:9.3px;color:#000;white-space:pre;letter-spacing:0.11px;left:931.2px;-webkit-text-stroke:0.1px #000;">1 Oct 16:45</div>
<div class="t" style="top:512.5px;height:12px;line-height:12px;font-size:9.3px;color:#000;white-space:pre;letter-spacing:0.11px;left:995.2px;-webkit-text-stroke:0.1px #000;">1 Oct 17:25</div>
<div class="t" style="top:512.5px;height:12px;line-height:12px;font-size:9.3px;color:#000;white-space:pre;letter-spacing:0.11px;left:1059.2px;-webkit-text-stroke:0.1px #000;">1 Oct 18:05</div>
<div class="t" style="top:76.5px;height:12px;line-height:12px;font-size:9.3px;color:#000;white-space:pre;letter-spacing:0.04px;left:306.0px;-webkit-text-stroke:0.1px #000;">XAUUSD,M5  2664.37 2664.75 2662.36 2662.40</div>
<div class="t" style="top:77.5px;height:12px;line-height:12px;font-size:9.3px;color:#000;white-space:pre;letter-spacing:-0.13px;left:1223.0px;-webkit-text-stroke:0.1px #000;">CandleWick Sniper</div>
<div style="left:289px;top:531px;width:1076px;height:1px;background:#e3e3e3;"></div>
<div style="left:288px;top:533px;width:1078px;height:19px;background:#f0f0f0;"></div>
<div style="left:288px;top:532px;width:1078px;height:1px;background:#000;"></div>
<div style="left:641px;top:532px;width:88px;height:19px;background:#fff;border:1px solid #000;border-top:none;box-shadow:1px 1px 0 #777;"></div>
<div style="left:642px;top:532px;width:85px;height:1px;background:#fff;"></div>
<div class="t" style="top:533.8px;height:16px;line-height:16px;font-size:12px;color:#6d6d6d;white-space:pre;letter-spacing:-0.93px;left:303.7px;">BTCUSD,M1</div>
<div class="t" style="top:533.8px;height:16px;line-height:16px;font-size:12px;color:#6d6d6d;white-space:pre;letter-spacing:-1.00px;left:387.8px;">BTCUSD,M1</div>
<div class="t" style="top:533.8px;height:16px;line-height:16px;font-size:12px;color:#6d6d6d;white-space:pre;letter-spacing:-0.73px;left:471.5px;">EURUSD,M15</div>
<div class="t" style="top:533.8px;height:16px;line-height:16px;font-size:12px;color:#6d6d6d;white-space:pre;letter-spacing:-0.85px;left:565.0px;">GBPUSD,M1</div>
<div class="t" style="top:533.8px;height:16px;line-height:16px;font-size:12px;color:#000;white-space:pre;letter-spacing:-0.52px;left:651.7px;">XAUUSD,M5</div>
<div class="t" style="top:533.8px;height:16px;line-height:16px;font-size:12px;color:#6d6d6d;white-space:pre;letter-spacing:-0.63px;left:740.1px;">US30,M5</div>
<div style="left:377px;top:536px;width:1px;height:14px;background:#6d6d6d;"></div>
<div style="left:461px;top:536px;width:1px;height:14px;background:#6d6d6d;"></div>
<div style="left:554px;top:536px;width:1px;height:14px;background:#6d6d6d;"></div>
<div style="left:797px;top:536px;width:1px;height:14px;background:#6d6d6d;"></div>
<svg style="left:1333px;top:538px" width="24" height="7" viewBox="0 0 24 7" fill="#8c8c8c"><path d="M3.500 0v6.500L0.500 3.250z"/><path d="M20 0v6.500l3.500-3.250z"/></svg>
<div style="left:0px;top:551px;width:289px;height:1px;background:#828282;"></div>
<div style="left:0px;top:552px;width:1366px;height:1px;background:#fff;"></div>
<div style="left:0px;top:556px;width:1366px;height:209px;background:#f0f0f0;"></div>
<svg style="left:4px;top:558px" width="7" height="7" viewBox="0 0 7 7"><path d="M0.800 1l5 5M5.800 1l-5 5" stroke="#000" stroke-width="1.500"/></svg>
<div style="left:1px;top:570px;width:13px;height:194px;background:linear-gradient(180deg,#d6e2f1 0%,#c6d5e7 60%,#c2d2e5 100%);"></div>
<div class="t" style="left:-17px;top:733px;width:50px;height:14px;line-height:14px;font-size:11.500px;transform:rotate(-90deg);transform-origin:center;text-align:center;letter-spacing:-0.300px;">Terminal</div>
<div style="left:15px;top:556px;width:1348px;height:186px;background:#fff;border-left:1px solid #a0a0a0;border-top:1px solid #a0a0a0;"></div>
<div style="left:16px;top:581px;width:1346px;height:1px;background:#d0d0d0;"></div>
<div style="left:135px;top:557px;width:1px;height:24px;background:#e0e0e0;"></div>
<div style="left:336px;top:557px;width:1px;height:24px;background:#e0e0e0;"></div>
<div style="left:428px;top:557px;width:1px;height:24px;background:#e0e0e0;"></div>
<div style="left:501px;top:557px;width:1px;height:24px;background:#e0e0e0;"></div>
<div style="left:593px;top:557px;width:1px;height:24px;background:#e0e0e0;"></div>
<div style="left:685px;top:557px;width:1px;height:24px;background:#e0e0e0;"></div>
<div style="left:777px;top:557px;width:1px;height:24px;background:#e0e0e0;"></div>
<div style="left:869px;top:557px;width:1px;height:24px;background:#e0e0e0;"></div>
<div style="left:1071px;top:557px;width:1px;height:24px;background:#e0e0e0;"></div>
<div style="left:1163px;top:557px;width:1px;height:24px;background:#e0e0e0;"></div>
<div style="left:1255px;top:557px;width:1px;height:24px;background:#e0e0e0;"></div>
<div style="left:1362px;top:557px;width:1px;height:24px;background:#e0e0e0;"></div>
<div class="t" style="top:561.0px;height:16px;line-height:16px;font-size:12px;color:#000;white-space:pre;letter-spacing:0.07px;left:21.5px;">Order</div>
<div class="t" style="top:561.0px;height:16px;line-height:16px;font-size:12px;color:#000;white-space:pre;right:1054.5px;letter-spacing:-0.300px;">Time</div>
<div class="t" style="top:561.0px;height:16px;line-height:16px;font-size:12px;color:#000;white-space:pre;right:942.2px;letter-spacing:-0.300px;">Type</div>
<div class="t" style="top:561.0px;height:16px;line-height:16px;font-size:12px;color:#000;white-space:pre;right:869.3px;letter-spacing:-0.300px;">Size</div>
<div class="t" style="top:561.0px;height:16px;line-height:16px;font-size:12px;color:#000;white-space:pre;right:778.0px;letter-spacing:-0.300px;">Symbol</div>
<div class="t" style="top:561.0px;height:16px;line-height:16px;font-size:12px;color:#000;white-space:pre;right:686.5px;letter-spacing:-0.300px;">Price</div>
<div class="t" style="top:561.0px;height:16px;line-height:16px;font-size:12px;color:#000;white-space:pre;right:593.5px;letter-spacing:-0.300px;">S / L</div>
<div class="t" style="top:561.0px;height:16px;line-height:16px;font-size:12px;color:#000;white-space:pre;right:501.5px;letter-spacing:-0.300px;">T / P</div>
<div class="t" style="top:561.0px;height:16px;line-height:16px;font-size:12px;color:#000;white-space:pre;right:299.5px;letter-spacing:-0.300px;">Time</div>
<div class="t" style="top:561.0px;height:16px;line-height:16px;font-size:12px;color:#000;white-space:pre;right:208.5px;letter-spacing:-0.300px;">Price</div>
<div class="t" style="top:561.0px;height:16px;line-height:16px;font-size:12px;color:#000;white-space:pre;right:116.0px;letter-spacing:-0.300px;">Swap</div>
<div class="t" style="top:561.0px;height:16px;line-height:16px;font-size:12px;color:#000;white-space:pre;right:10.0px;letter-spacing:-0.300px;">Profit</div>
<svg style="left:323px;top:566px" width="8" height="7" viewBox="0 0 8 7"><path d="M0.500 0.500h6.500L3.750 6z" fill="none" stroke="#888" stroke-width="0.900"/></svg>
<div style="left:16px;top:582px;width:1346px;height:19px;background:#fff;"></div>
<div style="left:16px;top:601px;width:1346px;height:1px;background:#d4d4d4;"></div>
<div style="left:134px;top:582px;width:1px;height:19px;background:#d0d0d0;"></div>
<div style="left:335px;top:582px;width:1px;height:19px;background:#d0d0d0;"></div>
<div style="left:427px;top:582px;width:1px;height:19px;background:#d0d0d0;"></div>
<div style="left:500px;top:582px;width:1px;height:19px;background:#d0d0d0;"></div>
<div style="left:592px;top:582px;width:1px;height:19px;background:#d0d0d0;"></div>
<div style="left:684px;top:582px;width:1px;height:19px;background:#d0d0d0;"></div>
<div style="left:776px;top:582px;width:1px;height:19px;background:#d0d0d0;"></div>
<div style="left:868px;top:582px;width:1px;height:19px;background:#d0d0d0;"></div>
<div style="left:1070px;top:582px;width:1px;height:19px;background:#d0d0d0;"></div>
<div style="left:1162px;top:582px;width:1px;height:19px;background:#d0d0d0;"></div>
<div style="left:1254px;top:582px;width:1px;height:19px;background:#d0d0d0;"></div>
<div style="left:1361px;top:582px;width:1px;height:19px;background:#d0d0d0;"></div>
<svg style="left:19px;top:582px" width="15" height="17" viewBox="0 0 15 17"><path d="M0.500 2.500h7l3.500 3.500v9h-10.500z" fill="#fff" stroke="#6a6a6a" stroke-width="1" stroke-linejoin="round"/><path d="M7.500 2.500v3.500h3.500" fill="#eee" stroke="#6a6a6a" stroke-width="0.800"/><circle cx="10.400" cy="12.900" r="3.200" fill="#2f8fe8" stroke="#1560b8" stroke-width="0.600"/><circle cx="9.500" cy="11.900" r="1" fill="#fff" fill-opacity="0.450"/></svg>
<div class="t" style="top:583.3px;height:16px;line-height:16px;font-size:11.3px;color:#000;white-space:pre;letter-spacing:-0.16px;left:37.5px;">65782427</div>
<div class="t" style="top:583.3px;height:16px;line-height:16px;font-size:11.3px;color:#000;white-space:pre;right:1032.7px;letter-spacing:-0.250px;">2024.10.01 18:34:44</div>
<div class="t" style="top:583.3px;height:16px;line-height:16px;font-size:12px;color:#000;white-space:pre;letter-spacing:0.14px;left:378.5px;">buy stop</div>
<div class="t" style="top:583.3px;height:16px;line-height:16px;font-size:11.3px;color:#000;white-space:pre;right:868.3px;letter-spacing:-0.150px;">0.01</div>
<div class="t" style="top:583.3px;height:16px;line-height:16px;font-size:12px;color:#000;white-space:pre;letter-spacing:0.13px;left:551.0px;">xauusd</div>
<div class="t" style="top:583.3px;height:16px;line-height:16px;font-size:11.3px;color:#000;white-space:pre;right:684.0px;letter-spacing:-0.150px;">2665.13</div>
<div class="t" style="top:583.3px;height:16px;line-height:16px;font-size:11.3px;color:#000;white-space:pre;right:591.5px;letter-spacing:-0.150px;">2662.13</div>
<div class="t" style="top:583.3px;height:16px;line-height:16px;font-size:11.3px;color:#000;white-space:pre;right:500.0px;letter-spacing:-0.150px;">2671.13</div>
<div class="t" style="top:583.3px;height:16px;line-height:16px;font-size:11.3px;color:#000;white-space:pre;right:297.5px;letter-spacing:-0.250px;">2024.10.01 18:35:01</div>
<div class="t" style="top:583.3px;height:16px;line-height:16px;font-size:11.3px;color:#000;white-space:pre;right:206.0px;letter-spacing:-0.150px;">2664.48</div>
<div style="left:16px;top:602px;width:1346px;height:19px;background:#ececec;"></div>
<div style="left:16px;top:621px;width:1346px;height:1px;background:#c8c8c8;"></div>
<div style="left:134px;top:602px;width:1px;height:19px;background:#c4c4c4;"></div>
<div style="left:335px;top:602px;width:1px;height:19px;background:#c4c4c4;"></div>
<div style="left:427px;top:602px;width:1px;height:19px;background:#c4c4c4;"></div>
<div style="left:500px;top:602px;width:1px;height:19px;background:#c4c4c4;"></div>
<div style="left:592px;top:602px;width:1px;height:19px;background:#c4c4c4;"></div>
<div style="left:684px;top:602px;width:1px;height:19px;background:#c4c4c4;"></div>
<div style="left:776px;top:602px;width:1px;height:19px;background:#c4c4c4;"></div>
<div style="left:868px;top:602px;width:1px;height:19px;background:#c4c4c4;"></div>
<div style="left:1070px;top:602px;width:1px;height:19px;background:#c4c4c4;"></div>
<div style="left:1162px;top:602px;width:1px;height:19px;background:#c4c4c4;"></div>
<div style="left:1254px;top:602px;width:1px;height:19px;background:#c4c4c4;"></div>
<div style="left:1361px;top:602px;width:1px;height:19px;background:#c4c4c4;"></div>
<svg style="left:19px;top:602px" width="15" height="17" viewBox="0 0 15 17"><path d="M0.500 2.500h7l3.500 3.500v9h-10.500z" fill="#fff" stroke="#6a6a6a" stroke-width="1" stroke-linejoin="round"/><path d="M7.500 2.500v3.500h3.500" fill="#eee" stroke="#6a6a6a" stroke-width="0.800"/><circle cx="10.400" cy="12.900" r="3.200" fill="#2f8fe8" stroke="#1560b8" stroke-width="0.600"/><circle cx="9.500" cy="11.900" r="1" fill="#fff" fill-opacity="0.450"/></svg>
<div class="t" style="top:603.3px;height:16px;line-height:16px;font-size:11.3px;color:#000;white-space:pre;letter-spacing:-0.16px;left:37.5px;">65778618</div>
<div class="t" style="top:603.3px;height:16px;line-height:16px;font-size:11.3px;color:#000;white-space:pre;right:1032.7px;letter-spacing:-0.250px;">2024.10.01 17:19:17</div>
<div class="t" style="top:603.3px;height:16px;line-height:16px;font-size:12px;color:#000;white-space:pre;letter-spacing:0.14px;left:378.5px;">buy stop</div>
<div class="t" style="top:603.3px;height:16px;line-height:16px;font-size:11.3px;color:#000;white-space:pre;right:868.3px;letter-spacing:-0.150px;">0.01</div>
<div class="t" style="top:603.3px;height:16px;line-height:16px;font-size:12px;color:#000;white-space:pre;letter-spacing:0.13px;left:551.0px;">xauusd</div>
<div class="t" style="top:603.3px;height:16px;line-height:16px;font-size:11.3px;color:#000;white-space:pre;right:684.0px;letter-spacing:-0.150px;">2665.94</div>
<div class="t" style="top:603.3px;height:16px;line-height:16px;font-size:11.3px;color:#000;white-space:pre;right:591.5px;letter-spacing:-0.150px;">2662.94</div>
<div class="t" style="top:603.3px;height:16px;line-height:16px;font-size:11.3px;color:#000;white-space:pre;right:500.0px;letter-spacing:-0.150px;">2671.94</div>
<div class="t" style="top:603.3px;height:16px;line-height:16px;font-size:11.3px;color:#000;white-space:pre;right:297.5px;letter-spacing:-0.250px;">2024.10.01 17:20:01</div>
<div class="t" style="top:603.3px;height:16px;line-height:16px;font-size:11.3px;color:#000;white-space:pre;right:206.0px;letter-spacing:-0.150px;">2658.74</div>
<div style="left:16px;top:622px;width:1346px;height:19px;background:#fff;"></div>
<div style="left:16px;top:641px;width:1346px;height:1px;background:#d4d4d4;"></div>
<div style="left:134px;top:622px;width:1px;height:19px;background:#d0d0d0;"></div>
<div style="left:335px;top:622px;width:1px;height:19px;background:#d0d0d0;"></div>
<div style="left:427px;top:622px;width:1px;height:19px;background:#d0d0d0;"></div>
<div style="left:500px;top:622px;width:1px;height:19px;background:#d0d0d0;"></div>
<div style="left:592px;top:622px;width:1px;height:19px;background:#d0d0d0;"></div>
<div style="left:684px;top:622px;width:1px;height:19px;background:#d0d0d0;"></div>
<div style="left:776px;top:622px;width:1px;height:19px;background:#d0d0d0;"></div>
<div style="left:868px;top:622px;width:1px;height:19px;background:#d0d0d0;"></div>
<div style="left:1070px;top:622px;width:1px;height:19px;background:#d0d0d0;"></div>
<div style="left:1162px;top:622px;width:1px;height:19px;background:#d0d0d0;"></div>
<div style="left:1254px;top:622px;width:1px;height:19px;background:#d0d0d0;"></div>
<div style="left:1361px;top:622px;width:1px;height:19px;background:#d0d0d0;"></div>
<div style="left:686px;top:622px;width:89px;height:18px;background:#ffa0a0;"></div>
<svg style="left:19px;top:622px" width="15" height="17" viewBox="0 0 15 17"><path d="M0.500 2.500h7l3.500 3.500v9h-10.500z" fill="#fff" stroke="#6a6a6a" stroke-width="1" stroke-linejoin="round"/><path d="M7.500 2.500v3.500h3.500" fill="#eee" stroke="#6a6a6a" stroke-width="0.800"/><circle cx="10.400" cy="12.900" r="3.200" fill="#f05a1e" stroke="#a83208" stroke-width="0.600"/><circle cx="9.500" cy="11.900" r="1" fill="#fff" fill-opacity="0.450"/></svg>
<div class="t" style="top:623.3px;height:16px;line-height:16px;font-size:11.3px;color:#000;white-space:pre;letter-spacing:-0.16px;left:37.5px;">65777952</div>
<div class="t" style="top:623.3px;height:16px;line-height:16px;font-size:11.3px;color:#000;white-space:pre;right:1032.7px;letter-spacing:-0.250px;">2024.10.01 17:12:46</div>
<div class="t" style="top:623.3px;height:16px;line-height:16px;font-size:12px;color:#000;white-space:pre;letter-spacing:-0.25px;left:408.0px;">sell</div>
<div class="t" style="top:623.3px;height:16px;line-height:16px;font-size:11.3px;color:#000;white-space:pre;right:868.3px;letter-spacing:-0.150px;">0.01</div>
<div class="t" style="top:623.3px;height:16px;line-height:16px;font-size:12px;color:#000;white-space:pre;letter-spacing:0.13px;left:551.0px;">xauusd</div>
<div class="t" style="top:623.3px;height:16px;line-height:16px;font-size:11.3px;color:#000;white-space:pre;right:684.0px;letter-spacing:-0.150px;">2664.62</div>
<div class="t" style="top:623.3px;height:16px;line-height:16px;font-size:11.3px;color:#000;white-space:pre;right:591.5px;letter-spacing:-0.150px;">2662.72</div>
<div class="t" style="top:623.3px;height:16px;line-height:16px;font-size:11.3px;color:#000;white-space:pre;right:500.0px;letter-spacing:-0.150px;">2658.86</div>
<div class="t" style="top:623.3px;height:16px;line-height:16px;font-size:11.3px;color:#000;white-space:pre;right:297.5px;letter-spacing:-0.250px;">2024.10.01 17:13:07</div>
<div class="t" style="top:623.3px;height:16px;line-height:16px;font-size:11.3px;color:#000;white-space:pre;right:206.0px;letter-spacing:-0.150px;">2662.82</div>
<div class="t" style="top:623.3px;height:16px;line-height:16px;font-size:11.3px;color:#000;white-space:pre;right:113.5px;letter-spacing:-0.150px;">0.00</div>
<div class="t" style="top:623.3px;height:16px;line-height:16px;font-size:11.3px;color:#000;white-space:pre;right:8.0px;letter-spacing:-0.150px;">1.80</div>
<div style="left:16px;top:641px;width:1346px;height:20px;background:#0078d7;"></div>
<div style="left:134px;top:641px;width:1px;height:20px;background:#3d93df;"></div>
<div style="left:335px;top:641px;width:1px;height:20px;background:#3d93df;"></div>
<div style="left:427px;top:641px;width:1px;height:20px;background:#3d93df;"></div>
<div style="left:500px;top:641px;width:1px;height:20px;background:#3d93df;"></div>
<div style="left:592px;top:641px;width:1px;height:20px;background:#3d93df;"></div>
<div style="left:684px;top:641px;width:1px;height:20px;background:#3d93df;"></div>
<div style="left:776px;top:641px;width:1px;height:20px;background:#3d93df;"></div>
<div style="left:868px;top:641px;width:1px;height:20px;background:#3d93df;"></div>
<div style="left:1070px;top:641px;width:1px;height:20px;background:#3d93df;"></div>
<div style="left:1162px;top:641px;width:1px;height:20px;background:#3d93df;"></div>
<div style="left:1254px;top:641px;width:1px;height:20px;background:#3d93df;"></div>
<div style="left:686px;top:642px;width:90px;height:18px;background:#ffa0a0;border:1px solid #cfe0f5;"></div>
<svg style="left:19px;top:642px" width="15" height="17" viewBox="0 0 15 17"><path d="M0.500 2.500h7l3.500 3.500v9h-10.500z" fill="#fff" stroke="#6a6a6a" stroke-width="1" stroke-linejoin="round"/><path d="M7.500 2.500v3.500h3.500" fill="#eee" stroke="#6a6a6a" stroke-width="0.800"/><circle cx="10.400" cy="12.900" r="3.200" fill="#2f8fe8" stroke="#1560b8" stroke-width="0.600"/><circle cx="9.500" cy="11.900" r="1" fill="#fff" fill-opacity="0.450"/></svg>
<div class="t" style="top:643.3px;height:16px;line-height:16px;font-size:11.3px;color:#fff;white-space:pre;letter-spacing:-0.16px;left:37.5px;">65776802</div>
<div class="t" style="top:643.3px;height:16px;line-height:16px;font-size:11.3px;color:#fff;white-space:pre;right:1032.7px;letter-spacing:-0.250px;">2024.10.01 17:00:07</div>
<div class="t" style="top:643.3px;height:16px;line-height:16px;font-size:12px;color:#fff;white-space:pre;letter-spacing:0.28px;left:404.8px;">buy</div>
<div class="t" style="top:643.3px;height:16px;line-height:16px;font-size:11.3px;color:#fff;white-space:pre;right:868.3px;letter-spacing:-0.150px;">0.01</div>
<div class="t" style="top:643.3px;height:16px;line-height:16px;font-size:12px;color:#fff;white-space:pre;letter-spacing:0.13px;left:551.0px;">xauusd</div>
<div class="t" style="top:643.3px;height:16px;line-height:16px;font-size:11.3px;color:#fff;white-space:pre;right:684.0px;letter-spacing:-0.150px;">2668.02</div>
<div class="t" style="top:643.3px;height:16px;line-height:16px;font-size:11.3px;color:#000;white-space:pre;right:591.5px;letter-spacing:-0.150px;">2668.12</div>
<div class="t" style="top:643.3px;height:16px;line-height:16px;font-size:11.3px;color:#fff;white-space:pre;right:500.0px;letter-spacing:-0.150px;">2674.15</div>
<div class="t" style="top:643.3px;height:16px;line-height:16px;font-size:11.3px;color:#fff;white-space:pre;right:297.5px;letter-spacing:-0.250px;">2024.10.01 17:00:10</div>
<div class="t" style="top:643.3px;height:16px;line-height:16px;font-size:11.3px;color:#fff;white-space:pre;right:206.0px;letter-spacing:-0.150px;">2668.12</div>
<div class="t" style="top:643.3px;height:16px;line-height:16px;font-size:11.3px;color:#fff;white-space:pre;right:113.5px;letter-spacing:-0.150px;">0.00</div>
<div class="t" style="top:643.3px;height:16px;line-height:16px;font-size:11.3px;color:#fff;white-space:pre;right:8.0px;letter-spacing:-0.150px;">0.10</div>
<div style="left:16px;top:662px;width:1346px;height:19px;background:#fff;"></div>
<div style="left:16px;top:681px;width:1346px;height:1px;background:#d4d4d4;"></div>
<div style="left:134px;top:662px;width:1px;height:19px;background:#d0d0d0;"></div>
<div style="left:335px;top:662px;width:1px;height:19px;background:#d0d0d0;"></div>
<div style="left:427px;top:662px;width:1px;height:19px;background:#d0d0d0;"></div>
<div style="left:500px;top:662px;width:1px;height:19px;background:#d0d0d0;"></div>
<div style="left:592px;top:662px;width:1px;height:19px;background:#d0d0d0;"></div>
<div style="left:684px;top:662px;width:1px;height:19px;background:#d0d0d0;"></div>
<div style="left:776px;top:662px;width:1px;height:19px;background:#d0d0d0;"></div>
<div style="left:868px;top:662px;width:1px;height:19px;background:#d0d0d0;"></div>
<div style="left:1070px;top:662px;width:1px;height:19px;background:#d0d0d0;"></div>
<div style="left:1162px;top:662px;width:1px;height:19px;background:#d0d0d0;"></div>
<div style="left:1254px;top:662px;width:1px;height:19px;background:#d0d0d0;"></div>
<div style="left:1361px;top:662px;width:1px;height:19px;background:#d0d0d0;"></div>
<svg style="left:19px;top:662px" width="15" height="17" viewBox="0 0 15 17"><path d="M0.500 2.500h7l3.500 3.500v9h-10.500z" fill="#fff" stroke="#6a6a6a" stroke-width="1" stroke-linejoin="round"/><path d="M7.500 2.500v3.500h3.500" fill="#eee" stroke="#6a6a6a" stroke-width="0.800"/><circle cx="10.400" cy="12.900" r="3.200" fill="#f05a1e" stroke="#a83208" stroke-width="0.600"/><circle cx="9.500" cy="11.900" r="1" fill="#fff" fill-opacity="0.450"/></svg>
<div class="t" style="top:663.3px;height:16px;line-height:16px;font-size:11.3px;color:#000;white-space:pre;letter-spacing:-0.16px;left:37.5px;">65775247</div>
<div class="t" style="top:663.3px;height:16px;line-height:16px;font-size:11.3px;color:#000;white-space:pre;right:1032.7px;letter-spacing:-0.250px;">2024.10.01 16:43:53</div>
<div class="t" style="top:663.3px;height:16px;line-height:16px;font-size:12px;color:#000;white-space:pre;letter-spacing:-0.11px;left:382.0px;">sell stop</div>
<div class="t" style="top:663.3px;height:16px;line-height:16px;font-size:11.3px;color:#000;white-space:pre;right:868.3px;letter-spacing:-0.150px;">0.01</div>
<div class="t" style="top:663.3px;height:16px;line-height:16px;font-size:12px;color:#000;white-space:pre;letter-spacing:0.13px;left:551.0px;">xauusd</div>
<div class="t" style="top:663.3px;height:16px;line-height:16px;font-size:11.3px;color:#000;white-space:pre;right:684.0px;letter-spacing:-0.150px;">2661.79</div>
<div class="t" style="top:663.3px;height:16px;line-height:16px;font-size:11.3px;color:#000;white-space:pre;right:591.5px;letter-spacing:-0.150px;">2664.79</div>
<div class="t" style="top:663.3px;height:16px;line-height:16px;font-size:11.3px;color:#000;white-space:pre;right:500.0px;letter-spacing:-0.150px;">2655.79</div>
<div class="t" style="top:663.3px;height:16px;line-height:16px;font-size:11.3px;color:#000;white-space:pre;right:297.5px;letter-spacing:-0.250px;">2024.10.01 16:45:01</div>
<div class="t" style="top:663.3px;height:16px;line-height:16px;font-size:11.3px;color:#000;white-space:pre;right:206.0px;letter-spacing:-0.150px;">2663.10</div>
<div style="left:16px;top:682px;width:1346px;height:19px;background:#ececec;"></div>
<div style="left:16px;top:701px;width:1346px;height:1px;background:#c8c8c8;"></div>
<div style="left:134px;top:682px;width:1px;height:19px;background:#c4c4c4;"></div>
<div style="left:335px;top:682px;width:1px;height:19px;background:#c4c4c4;"></div>
<div style="left:427px;top:682px;width:1px;height:19px;background:#c4c4c4;"></div>
<div style="left:500px;top:682px;width:1px;height:19px;background:#c4c4c4;"></div>
<div style="left:592px;top:682px;width:1px;height:19px;background:#c4c4c4;"></div>
<div style="left:684px;top:682px;width:1px;height:19px;background:#c4c4c4;"></div>
<div style="left:776px;top:682px;width:1px;height:19px;background:#c4c4c4;"></div>
<div style="left:868px;top:682px;width:1px;height:19px;background:#c4c4c4;"></div>
<div style="left:1070px;top:682px;width:1px;height:19px;background:#c4c4c4;"></div>
<div style="left:1162px;top:682px;width:1px;height:19px;background:#c4c4c4;"></div>
<div style="left:1254px;top:682px;width:1px;height:19px;background:#c4c4c4;"></div>
<div style="left:1361px;top:682px;width:1px;height:19px;background:#c4c4c4;"></div>
<div style="left:686px;top:682px;width:89px;height:18px;background:#ffa0a0;"></div>
<svg style="left:19px;top:682px" width="15" height="17" viewBox="0 0 15 17"><path d="M0.500 2.500h7l3.500 3.500v9h-10.500z" fill="#fff" stroke="#6a6a6a" stroke-width="1" stroke-linejoin="round"/><path d="M7.500 2.500v3.500h3.500" fill="#eee" stroke="#6a6a6a" stroke-width="0.800"/><circle cx="10.400" cy="12.900" r="3.200" fill="#f05a1e" stroke="#a83208" stroke-width="0.600"/><circle cx="9.500" cy="11.900" r="1" fill="#fff" fill-opacity="0.450"/></svg>
<div class="t" style="top:683.3px;height:16px;line-height:16px;font-size:11.3px;color:#000;white-space:pre;letter-spacing:-0.16px;left:37.5px;">65774038</div>
<div class="t" style="top:683.3px;height:16px;line-height:16px;font-size:11.3px;color:#000;white-space:pre;right:1032.7px;letter-spacing:-0.250px;">2024.10.01 16:36:20</div>
<div class="t" style="top:683.3px;height:16px;line-height:16px;font-size:12px;color:#000;white-space:pre;letter-spacing:-0.25px;left:408.0px;">sell</div>
<div class="t" style="top:683.3px;height:16px;line-height:16px;font-size:11.3px;color:#000;white-space:pre;right:868.3px;letter-spacing:-0.150px;">0.01</div>
<div class="t" style="top:683.3px;height:16px;line-height:16px;font-size:12px;color:#000;white-space:pre;letter-spacing:0.13px;left:551.0px;">xauusd</div>
<div class="t" style="top:683.3px;height:16px;line-height:16px;font-size:11.3px;color:#000;white-space:pre;right:684.0px;letter-spacing:-0.150px;">2663.28</div>
<div class="t" style="top:683.3px;height:16px;line-height:16px;font-size:11.3px;color:#000;white-space:pre;right:591.5px;letter-spacing:-0.150px;">2662.58</div>
<div class="t" style="top:683.3px;height:16px;line-height:16px;font-size:11.3px;color:#000;white-space:pre;right:500.0px;letter-spacing:-0.150px;">2657.36</div>
<div class="t" style="top:683.3px;height:16px;line-height:16px;font-size:11.3px;color:#000;white-space:pre;right:297.5px;letter-spacing:-0.250px;">2024.10.01 16:36:39</div>
<div class="t" style="top:683.3px;height:16px;line-height:16px;font-size:11.3px;color:#000;white-space:pre;right:206.0px;letter-spacing:-0.150px;">2662.66</div>
<div class="t" style="top:683.3px;height:16px;line-height:16px;font-size:11.3px;color:#000;white-space:pre;right:113.5px;letter-spacing:-0.150px;">0.00</div>
<div class="t" style="top:683.3px;height:16px;line-height:16px;font-size:11.3px;color:#000;white-space:pre;right:8.0px;letter-spacing:-0.150px;">0.62</div>
<div style="left:16px;top:702px;width:1346px;height:19px;background:#fff;"></div>
<div style="left:16px;top:721px;width:1346px;height:1px;background:#d4d4d4;"></div>
<div style="left:134px;top:702px;width:1px;height:19px;background:#d0d0d0;"></div>
<div style="left:335px;top:702px;width:1px;height:19px;background:#d0d0d0;"></div>
<div style="left:427px;top:702px;width:1px;height:19px;background:#d0d0d0;"></div>
<div style="left:500px;top:702px;width:1px;height:19px;background:#d0d0d0;"></div>
<div style="left:592px;top:702px;width:1px;height:19px;background:#d0d0d0;"></div>
<div style="left:684px;top:702px;width:1px;height:19px;background:#d0d0d0;"></div>
<div style="left:776px;top:702px;width:1px;height:19px;background:#d0d0d0;"></div>
<div style="left:868px;top:702px;width:1px;height:19px;background:#d0d0d0;"></div>
<div style="left:1070px;top:702px;width:1px;height:19px;background:#d0d0d0;"></div>
<div style="left:1162px;top:702px;width:1px;height:19px;background:#d0d0d0;"></div>
<div style="left:1254px;top:702px;width:1px;height:19px;background:#d0d0d0;"></div>
<div style="left:1361px;top:702px;width:1px;height:19px;background:#d0d0d0;"></div>
<svg style="left:19px;top:702px" width="15" height="17" viewBox="0 0 15 17"><path d="M0.500 2.500h7l3.500 3.500v9h-10.500z" fill="#fff" stroke="#6a6a6a" stroke-width="1" stroke-linejoin="round"/><path d="M7.500 2.500v3.500h3.500" fill="#eee" stroke="#6a6a6a" stroke-width="0.800"/><circle cx="10.400" cy="12.900" r="3.200" fill="#f05a1e" stroke="#a83208" stroke-width="0.600"/><circle cx="9.500" cy="11.900" r="1" fill="#fff" fill-opacity="0.450"/></svg>
<div class="t" style="top:703.3px;height:16px;line-height:16px;font-size:11.3px;color:#000;white-space:pre;letter-spacing:-0.16px;left:37.5px;">65773704</div>
<div class="t" style="top:703.3px;height:16px;line-height:16px;font-size:11.3px;color:#000;white-space:pre;right:1032.7px;letter-spacing:-0.250px;">2024.10.01 16:34:49</div>
<div class="t" style="top:703.3px;height:16px;line-height:16px;font-size:12px;color:#000;white-space:pre;letter-spacing:-0.11px;left:382.0px;">sell stop</div>
<div class="t" style="top:703.3px;height:16px;line-height:16px;font-size:11.3px;color:#000;white-space:pre;right:868.3px;letter-spacing:-0.150px;">0.01</div>
<div class="t" style="top:703.3px;height:16px;line-height:16px;font-size:12px;color:#000;white-space:pre;letter-spacing:0.13px;left:551.0px;">xauusd</div>
<div class="t" style="top:703.3px;height:16px;line-height:16px;font-size:11.3px;color:#000;white-space:pre;right:684.0px;letter-spacing:-0.150px;">2653.86</div>
<div class="t" style="top:703.3px;height:16px;line-height:16px;font-size:11.3px;color:#000;white-space:pre;right:591.5px;letter-spacing:-0.150px;">2656.86</div>
<div class="t" style="top:703.3px;height:16px;line-height:16px;font-size:11.3px;color:#000;white-space:pre;right:500.0px;letter-spacing:-0.150px;">2647.86</div>
<div class="t" style="top:703.3px;height:16px;line-height:16px;font-size:11.3px;color:#000;white-space:pre;right:297.5px;letter-spacing:-0.250px;">2024.10.01 16:35:01</div>
<div class="t" style="top:703.3px;height:16px;line-height:16px;font-size:11.3px;color:#000;white-space:pre;right:206.0px;letter-spacing:-0.150px;">2663.46</div>
<div style="left:16px;top:721px;width:1346px;height:20px;background:#c0c0c0;"></div>
<svg style="left:22px;top:727px" width="8" height="8" viewBox="0 0 8 8"><circle cx="4" cy="4.300" r="3.100" fill="#cfcfcf" stroke="#8a8a8a" stroke-width="0.900"/><path d="M2.300 3.300a2 2 0 0 1 2-1.200" stroke="#f4f4f4" stroke-width="0.900" fill="none"/></svg>
<div class="t" style="top:722.6px;height:16px;line-height:16px;font-size:12px;color:#000;white-space:pre;font-weight:bold;letter-spacing:-0.14px;left:38.1px;">Profit/Loss: 2.52  Credit: 0.00  Deposit: 0.00  Withdrawal: 0.00</div>
<div class="t" style="top:722.6px;height:16px;line-height:16px;font-size:12px;color:#000;white-space:pre;font-weight:bold;right:8.0px;letter-spacing:-0.300px;">2.52</div>
<div style="left:15px;top:742px;width:1351px;height:22px;background:#f0f0f0;"></div>
<div style="left:15px;top:741px;width:1348px;height:1px;background:#000;"></div>
<div style="left:135px;top:741px;width:107px;height:20px;background:#fff;border:1px solid #000;border-top:none;box-shadow:1px 1px 0 #777;"></div>
<div style="left:136px;top:741px;width:104px;height:1px;background:#fff;"></div>
<div class="t" style="top:742.8px;height:16px;line-height:16px;font-size:12px;color:#6d6d6d;white-space:pre;letter-spacing:-0.38px;left:27.5px;">Trade</div>
<div class="t" style="top:742.8px;height:16px;line-height:16px;font-size:12px;color:#6d6d6d;white-space:pre;letter-spacing:-0.21px;left:76.5px;">Exposure</div>
<div class="t" style="top:742.8px;height:16px;line-height:16px;font-size:12px;color:#000;white-space:pre;letter-spacing:0.16px;left:145.1px;">Account History</div>
<div class="t" style="top:742.8px;height:16px;line-height:16px;font-size:12px;color:#6d6d6d;white-space:pre;letter-spacing:-0.10px;left:250.9px;">News</div>
<div class="t" style="top:742.8px;height:16px;line-height:16px;font-size:12px;color:#6d6d6d;white-space:pre;letter-spacing:0.05px;left:311.5px;">Alerts</div>
<div class="t" style="top:742.8px;height:16px;line-height:16px;font-size:12px;color:#6d6d6d;white-space:pre;letter-spacing:0.16px;left:362.0px;">Mailbox</div>
<div class="t" style="top:742.8px;height:16px;line-height:16px;font-size:12px;color:#6d6d6d;white-space:pre;letter-spacing:0.05px;left:437.0px;">Market</div>
<div class="t" style="top:742.8px;height:16px;line-height:16px;font-size:12px;color:#6d6d6d;white-space:pre;letter-spacing:-0.27px;left:505.5px;">Signals</div>
<div class="t" style="top:742.8px;height:16px;line-height:16px;font-size:12px;color:#6d6d6d;white-space:pre;letter-spacing:-0.04px;left:563.0px;">Articles</div>
<div class="t" style="top:742.8px;height:16px;line-height:16px;font-size:12px;color:#6d6d6d;white-space:pre;letter-spacing:-0.49px;left:622.0px;">Code Base</div>
<div class="t" style="top:742.8px;height:16px;line-height:16px;font-size:12px;color:#6d6d6d;white-space:pre;letter-spacing:-0.31px;left:696.5px;">Experts</div>
<div class="t" style="top:742.8px;height:16px;line-height:16px;font-size:12px;color:#6d6d6d;white-space:pre;letter-spacing:-0.12px;left:754.0px;">Journal</div>
<div style="left:67px;top:745px;width:1px;height:14px;background:#6d6d6d;"></div>
<div style="left:302px;top:745px;width:1px;height:14px;background:#6d6d6d;"></div>
<div style="left:352px;top:745px;width:1px;height:14px;background:#6d6d6d;"></div>
<div style="left:426px;top:745px;width:1px;height:14px;background:#6d6d6d;"></div>
<div style="left:496px;top:745px;width:1px;height:14px;background:#6d6d6d;"></div>
<div style="left:553px;top:745px;width:1px;height:14px;background:#6d6d6d;"></div>
<div style="left:612px;top:745px;width:1px;height:14px;background:#6d6d6d;"></div>
<div style="left:688px;top:745px;width:1px;height:14px;background:#6d6d6d;"></div>
<div style="left:745px;top:745px;width:1px;height:14px;background:#6d6d6d;"></div>
<div style="left:803px;top:745px;width:1px;height:14px;background:#6d6d6d;"></div>
<div class="t" style="top:750.3px;height:10px;line-height:10px;font-size:10px;color:#e81010;white-space:pre;font-weight:bold;letter-spacing:-0.21px;left:281.5px;">99</div>
<div class="t" style="top:750.3px;height:10px;line-height:10px;font-size:10px;color:#e81010;white-space:pre;font-weight:bold;letter-spacing:-0.06px;left:407.0px;">10</div>
<div class="t" style="top:750.3px;height:10px;line-height:10px;font-size:10px;color:#e81010;white-space:pre;font-weight:bold;letter-spacing:-0.31px;left:476.0px;">72</div>
<div style="left:1363px;top:556px;width:1px;height:186px;background:#fff;"></div>
<div style="left:15px;top:742px;width:1px;height:21px;background:#a0a0a0;"></div>
<div style="left:14px;top:764px;width:1352px;height:1px;background:#fff;"></div>
<div style="left:0px;top:766px;width:1366px;height:1px;background:#a0a0a0;"></div>
<div style="left:0px;top:767px;width:1366px;height:1px;background:#fff;"></div>
</body></html>
